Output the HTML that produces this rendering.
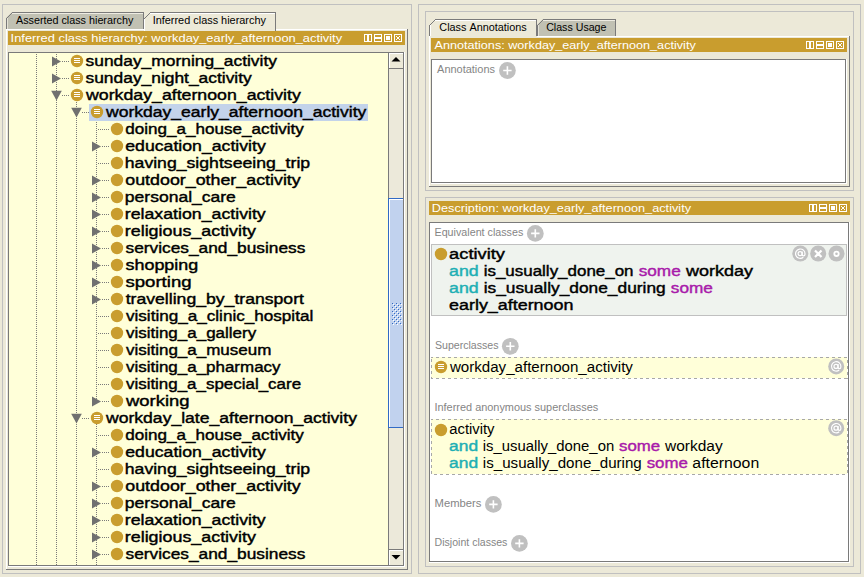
<!DOCTYPE html>
<html><head><meta charset="utf-8"><style>
html,body{margin:0;padding:0;background:#ECE9D8;width:864px;height:577px;overflow:hidden}
svg{display:block} rect{shape-rendering:crispEdges}
text{font-family:"Liberation Sans",sans-serif;font-kerning:none;white-space:pre}
</style></head><body>
<svg width="864" height="577" viewBox="0 0 864 577">
<rect x="0" y="0" width="864" height="577" fill="#ECE9D8"/>
<rect x="2" y="4" width="410" height="1" fill="#C0C0C0"/>
<rect x="2" y="573" width="410" height="1" fill="#C0C0C0"/>
<rect x="2" y="4" width="1" height="570" fill="#C0C0C0"/>
<rect x="411" y="4" width="1" height="570" fill="#C0C0C0"/>
<polygon points="6,29 6,18 12,12 144,12 144,29" fill="#C1C1B3"/>
<rect x="12" y="13" width="131" height="1" fill="#EEECE2"/>
<rect x="7" y="18" width="1" height="11" fill="#E4E2D6"/>
<rect x="12" y="12" width="132" height="1" fill="#7A7A7A"/>
<rect x="6" y="18" width="1" height="11" fill="#7A7A7A"/>
<rect x="143" y="12" width="1" height="17" fill="#7A7A7A"/>
<rect x="6" y="18" width="1" height="1" fill="#7A7A7A"/>
<rect x="7" y="17" width="1" height="1" fill="#7A7A7A"/>
<rect x="8" y="16" width="1" height="1" fill="#7A7A7A"/>
<rect x="9" y="15" width="1" height="1" fill="#7A7A7A"/>
<rect x="10" y="14" width="1" height="1" fill="#7A7A7A"/>
<rect x="11" y="13" width="1" height="1" fill="#7A7A7A"/>
<text x="15.98" y="24" font-size="10.00" font-weight="normal" fill="#000" textLength="117.34" lengthAdjust="spacingAndGlyphs">Asserted class hierarchy</text>
<polygon points="144,31 144,18 150,12 276,12 276,31" fill="#ECE9D8"/>
<rect x="150" y="12" width="126" height="1" fill="#7A7A7A"/>
<rect x="150" y="13" width="125" height="1" fill="#FFFFFF"/>
<rect x="144" y="18" width="1" height="13" fill="#FFFFFF"/>
<rect x="275" y="12" width="1" height="19" fill="#7A7A7A"/>
<rect x="144" y="18" width="1" height="1" fill="#7A7A7A"/>
<rect x="145" y="17" width="1" height="1" fill="#7A7A7A"/>
<rect x="146" y="16" width="1" height="1" fill="#7A7A7A"/>
<rect x="147" y="15" width="1" height="1" fill="#7A7A7A"/>
<rect x="148" y="14" width="1" height="1" fill="#7A7A7A"/>
<rect x="149" y="13" width="1" height="1" fill="#7A7A7A"/>
<text x="152.69" y="24" font-size="10.00" font-weight="normal" fill="#000" textLength="113.23" lengthAdjust="spacingAndGlyphs">Inferred class hierarchy</text>
<rect x="6" y="29" width="138" height="1" fill="#FFFFFF"/>
<rect x="276" y="29" width="131" height="1" fill="#FFFFFF"/>
<rect x="6" y="29" width="1" height="540" fill="#FFFFFF"/>
<rect x="407" y="29" width="1" height="541" fill="#7A7A7A"/>
<rect x="6" y="569" width="402" height="1" fill="#7A7A7A"/>
<rect x="8" y="31" width="397" height="14" fill="#C99D2E"/>
<text x="10.61" y="42" font-size="11.44" font-weight="normal" fill="#FFFFFF" textLength="331.51" lengthAdjust="spacingAndGlyphs">Inferred class hierarchy: workday_early_afternoon_activity</text>
<rect x="364" y="34" width="8" height="8" fill="#FFFFFF"/>
<rect x="365" y="35" width="2" height="6" fill="#C99D2E"/>
<rect x="369" y="35" width="2" height="6" fill="#C99D2E"/>
<rect x="374" y="34" width="8" height="8" fill="#FFFFFF"/>
<rect x="375" y="35" width="6" height="2" fill="#C99D2E"/>
<rect x="375" y="39" width="6" height="2" fill="#C99D2E"/>
<rect x="384" y="34" width="8" height="8" fill="#FFFFFF"/>
<rect x="385" y="35" width="6" height="6" fill="#C99D2E"/>
<rect x="386" y="36" width="4" height="4" fill="#FFFFFF"/>
<rect x="394" y="34" width="8" height="8" fill="#FFFFFF"/>
<rect x="395" y="35" width="6" height="6" fill="#C99D2E"/>
<rect x="396" y="36" width="1" height="1" fill="#FFFFFF"/>
<rect x="399" y="36" width="1" height="1" fill="#FFFFFF"/>
<rect x="397" y="37" width="1" height="1" fill="#FFFFFF"/>
<rect x="398" y="37" width="1" height="1" fill="#FFFFFF"/>
<rect x="397" y="38" width="1" height="1" fill="#FFFFFF"/>
<rect x="398" y="38" width="1" height="1" fill="#FFFFFF"/>
<rect x="396" y="39" width="1" height="1" fill="#FFFFFF"/>
<rect x="399" y="39" width="1" height="1" fill="#FFFFFF"/>
<rect x="9" y="53" width="394" height="512" fill="#FFFFD9"/>
<rect x="8" y="52" width="396" height="1" fill="#7A7A7A"/>
<rect x="8" y="52" width="1" height="514" fill="#7A7A7A"/>
<rect x="8" y="565" width="396" height="1" fill="#7A7A7A"/>
<rect x="403" y="52" width="1" height="514" fill="#7A7A7A"/>
<rect x="8" y="566" width="397" height="1" fill="#FFFFFF"/>
<rect x="404" y="52" width="1" height="515" fill="#FFFFFF"/>
<rect x="89" y="104" width="279" height="17" fill="#C3D3EA"/>
<rect x="36" y="54" width="1" height="1" fill="#7A7A7A"/>
<rect x="36" y="56" width="1" height="1" fill="#7A7A7A"/>
<rect x="36" y="58" width="1" height="1" fill="#7A7A7A"/>
<rect x="36" y="60" width="1" height="1" fill="#7A7A7A"/>
<rect x="36" y="62" width="1" height="1" fill="#7A7A7A"/>
<rect x="36" y="64" width="1" height="1" fill="#7A7A7A"/>
<rect x="36" y="66" width="1" height="1" fill="#7A7A7A"/>
<rect x="36" y="68" width="1" height="1" fill="#7A7A7A"/>
<rect x="36" y="70" width="1" height="1" fill="#7A7A7A"/>
<rect x="36" y="72" width="1" height="1" fill="#7A7A7A"/>
<rect x="36" y="74" width="1" height="1" fill="#7A7A7A"/>
<rect x="36" y="76" width="1" height="1" fill="#7A7A7A"/>
<rect x="36" y="78" width="1" height="1" fill="#7A7A7A"/>
<rect x="36" y="80" width="1" height="1" fill="#7A7A7A"/>
<rect x="36" y="82" width="1" height="1" fill="#7A7A7A"/>
<rect x="36" y="84" width="1" height="1" fill="#7A7A7A"/>
<rect x="36" y="86" width="1" height="1" fill="#7A7A7A"/>
<rect x="36" y="88" width="1" height="1" fill="#7A7A7A"/>
<rect x="36" y="90" width="1" height="1" fill="#7A7A7A"/>
<rect x="36" y="92" width="1" height="1" fill="#7A7A7A"/>
<rect x="36" y="94" width="1" height="1" fill="#7A7A7A"/>
<rect x="36" y="96" width="1" height="1" fill="#7A7A7A"/>
<rect x="36" y="98" width="1" height="1" fill="#7A7A7A"/>
<rect x="36" y="100" width="1" height="1" fill="#7A7A7A"/>
<rect x="36" y="102" width="1" height="1" fill="#7A7A7A"/>
<rect x="36" y="104" width="1" height="1" fill="#7A7A7A"/>
<rect x="36" y="106" width="1" height="1" fill="#7A7A7A"/>
<rect x="36" y="108" width="1" height="1" fill="#7A7A7A"/>
<rect x="36" y="110" width="1" height="1" fill="#7A7A7A"/>
<rect x="36" y="112" width="1" height="1" fill="#7A7A7A"/>
<rect x="36" y="114" width="1" height="1" fill="#7A7A7A"/>
<rect x="36" y="116" width="1" height="1" fill="#7A7A7A"/>
<rect x="36" y="118" width="1" height="1" fill="#7A7A7A"/>
<rect x="36" y="120" width="1" height="1" fill="#7A7A7A"/>
<rect x="36" y="122" width="1" height="1" fill="#7A7A7A"/>
<rect x="36" y="124" width="1" height="1" fill="#7A7A7A"/>
<rect x="36" y="126" width="1" height="1" fill="#7A7A7A"/>
<rect x="36" y="128" width="1" height="1" fill="#7A7A7A"/>
<rect x="36" y="130" width="1" height="1" fill="#7A7A7A"/>
<rect x="36" y="132" width="1" height="1" fill="#7A7A7A"/>
<rect x="36" y="134" width="1" height="1" fill="#7A7A7A"/>
<rect x="36" y="136" width="1" height="1" fill="#7A7A7A"/>
<rect x="36" y="138" width="1" height="1" fill="#7A7A7A"/>
<rect x="36" y="140" width="1" height="1" fill="#7A7A7A"/>
<rect x="36" y="142" width="1" height="1" fill="#7A7A7A"/>
<rect x="36" y="144" width="1" height="1" fill="#7A7A7A"/>
<rect x="36" y="146" width="1" height="1" fill="#7A7A7A"/>
<rect x="36" y="148" width="1" height="1" fill="#7A7A7A"/>
<rect x="36" y="150" width="1" height="1" fill="#7A7A7A"/>
<rect x="36" y="152" width="1" height="1" fill="#7A7A7A"/>
<rect x="36" y="154" width="1" height="1" fill="#7A7A7A"/>
<rect x="36" y="156" width="1" height="1" fill="#7A7A7A"/>
<rect x="36" y="158" width="1" height="1" fill="#7A7A7A"/>
<rect x="36" y="160" width="1" height="1" fill="#7A7A7A"/>
<rect x="36" y="162" width="1" height="1" fill="#7A7A7A"/>
<rect x="36" y="164" width="1" height="1" fill="#7A7A7A"/>
<rect x="36" y="166" width="1" height="1" fill="#7A7A7A"/>
<rect x="36" y="168" width="1" height="1" fill="#7A7A7A"/>
<rect x="36" y="170" width="1" height="1" fill="#7A7A7A"/>
<rect x="36" y="172" width="1" height="1" fill="#7A7A7A"/>
<rect x="36" y="174" width="1" height="1" fill="#7A7A7A"/>
<rect x="36" y="176" width="1" height="1" fill="#7A7A7A"/>
<rect x="36" y="178" width="1" height="1" fill="#7A7A7A"/>
<rect x="36" y="180" width="1" height="1" fill="#7A7A7A"/>
<rect x="36" y="182" width="1" height="1" fill="#7A7A7A"/>
<rect x="36" y="184" width="1" height="1" fill="#7A7A7A"/>
<rect x="36" y="186" width="1" height="1" fill="#7A7A7A"/>
<rect x="36" y="188" width="1" height="1" fill="#7A7A7A"/>
<rect x="36" y="190" width="1" height="1" fill="#7A7A7A"/>
<rect x="36" y="192" width="1" height="1" fill="#7A7A7A"/>
<rect x="36" y="194" width="1" height="1" fill="#7A7A7A"/>
<rect x="36" y="196" width="1" height="1" fill="#7A7A7A"/>
<rect x="36" y="198" width="1" height="1" fill="#7A7A7A"/>
<rect x="36" y="200" width="1" height="1" fill="#7A7A7A"/>
<rect x="36" y="202" width="1" height="1" fill="#7A7A7A"/>
<rect x="36" y="204" width="1" height="1" fill="#7A7A7A"/>
<rect x="36" y="206" width="1" height="1" fill="#7A7A7A"/>
<rect x="36" y="208" width="1" height="1" fill="#7A7A7A"/>
<rect x="36" y="210" width="1" height="1" fill="#7A7A7A"/>
<rect x="36" y="212" width="1" height="1" fill="#7A7A7A"/>
<rect x="36" y="214" width="1" height="1" fill="#7A7A7A"/>
<rect x="36" y="216" width="1" height="1" fill="#7A7A7A"/>
<rect x="36" y="218" width="1" height="1" fill="#7A7A7A"/>
<rect x="36" y="220" width="1" height="1" fill="#7A7A7A"/>
<rect x="36" y="222" width="1" height="1" fill="#7A7A7A"/>
<rect x="36" y="224" width="1" height="1" fill="#7A7A7A"/>
<rect x="36" y="226" width="1" height="1" fill="#7A7A7A"/>
<rect x="36" y="228" width="1" height="1" fill="#7A7A7A"/>
<rect x="36" y="230" width="1" height="1" fill="#7A7A7A"/>
<rect x="36" y="232" width="1" height="1" fill="#7A7A7A"/>
<rect x="36" y="234" width="1" height="1" fill="#7A7A7A"/>
<rect x="36" y="236" width="1" height="1" fill="#7A7A7A"/>
<rect x="36" y="238" width="1" height="1" fill="#7A7A7A"/>
<rect x="36" y="240" width="1" height="1" fill="#7A7A7A"/>
<rect x="36" y="242" width="1" height="1" fill="#7A7A7A"/>
<rect x="36" y="244" width="1" height="1" fill="#7A7A7A"/>
<rect x="36" y="246" width="1" height="1" fill="#7A7A7A"/>
<rect x="36" y="248" width="1" height="1" fill="#7A7A7A"/>
<rect x="36" y="250" width="1" height="1" fill="#7A7A7A"/>
<rect x="36" y="252" width="1" height="1" fill="#7A7A7A"/>
<rect x="36" y="254" width="1" height="1" fill="#7A7A7A"/>
<rect x="36" y="256" width="1" height="1" fill="#7A7A7A"/>
<rect x="36" y="258" width="1" height="1" fill="#7A7A7A"/>
<rect x="36" y="260" width="1" height="1" fill="#7A7A7A"/>
<rect x="36" y="262" width="1" height="1" fill="#7A7A7A"/>
<rect x="36" y="264" width="1" height="1" fill="#7A7A7A"/>
<rect x="36" y="266" width="1" height="1" fill="#7A7A7A"/>
<rect x="36" y="268" width="1" height="1" fill="#7A7A7A"/>
<rect x="36" y="270" width="1" height="1" fill="#7A7A7A"/>
<rect x="36" y="272" width="1" height="1" fill="#7A7A7A"/>
<rect x="36" y="274" width="1" height="1" fill="#7A7A7A"/>
<rect x="36" y="276" width="1" height="1" fill="#7A7A7A"/>
<rect x="36" y="278" width="1" height="1" fill="#7A7A7A"/>
<rect x="36" y="280" width="1" height="1" fill="#7A7A7A"/>
<rect x="36" y="282" width="1" height="1" fill="#7A7A7A"/>
<rect x="36" y="284" width="1" height="1" fill="#7A7A7A"/>
<rect x="36" y="286" width="1" height="1" fill="#7A7A7A"/>
<rect x="36" y="288" width="1" height="1" fill="#7A7A7A"/>
<rect x="36" y="290" width="1" height="1" fill="#7A7A7A"/>
<rect x="36" y="292" width="1" height="1" fill="#7A7A7A"/>
<rect x="36" y="294" width="1" height="1" fill="#7A7A7A"/>
<rect x="36" y="296" width="1" height="1" fill="#7A7A7A"/>
<rect x="36" y="298" width="1" height="1" fill="#7A7A7A"/>
<rect x="36" y="300" width="1" height="1" fill="#7A7A7A"/>
<rect x="36" y="302" width="1" height="1" fill="#7A7A7A"/>
<rect x="36" y="304" width="1" height="1" fill="#7A7A7A"/>
<rect x="36" y="306" width="1" height="1" fill="#7A7A7A"/>
<rect x="36" y="308" width="1" height="1" fill="#7A7A7A"/>
<rect x="36" y="310" width="1" height="1" fill="#7A7A7A"/>
<rect x="36" y="312" width="1" height="1" fill="#7A7A7A"/>
<rect x="36" y="314" width="1" height="1" fill="#7A7A7A"/>
<rect x="36" y="316" width="1" height="1" fill="#7A7A7A"/>
<rect x="36" y="318" width="1" height="1" fill="#7A7A7A"/>
<rect x="36" y="320" width="1" height="1" fill="#7A7A7A"/>
<rect x="36" y="322" width="1" height="1" fill="#7A7A7A"/>
<rect x="36" y="324" width="1" height="1" fill="#7A7A7A"/>
<rect x="36" y="326" width="1" height="1" fill="#7A7A7A"/>
<rect x="36" y="328" width="1" height="1" fill="#7A7A7A"/>
<rect x="36" y="330" width="1" height="1" fill="#7A7A7A"/>
<rect x="36" y="332" width="1" height="1" fill="#7A7A7A"/>
<rect x="36" y="334" width="1" height="1" fill="#7A7A7A"/>
<rect x="36" y="336" width="1" height="1" fill="#7A7A7A"/>
<rect x="36" y="338" width="1" height="1" fill="#7A7A7A"/>
<rect x="36" y="340" width="1" height="1" fill="#7A7A7A"/>
<rect x="36" y="342" width="1" height="1" fill="#7A7A7A"/>
<rect x="36" y="344" width="1" height="1" fill="#7A7A7A"/>
<rect x="36" y="346" width="1" height="1" fill="#7A7A7A"/>
<rect x="36" y="348" width="1" height="1" fill="#7A7A7A"/>
<rect x="36" y="350" width="1" height="1" fill="#7A7A7A"/>
<rect x="36" y="352" width="1" height="1" fill="#7A7A7A"/>
<rect x="36" y="354" width="1" height="1" fill="#7A7A7A"/>
<rect x="36" y="356" width="1" height="1" fill="#7A7A7A"/>
<rect x="36" y="358" width="1" height="1" fill="#7A7A7A"/>
<rect x="36" y="360" width="1" height="1" fill="#7A7A7A"/>
<rect x="36" y="362" width="1" height="1" fill="#7A7A7A"/>
<rect x="36" y="364" width="1" height="1" fill="#7A7A7A"/>
<rect x="36" y="366" width="1" height="1" fill="#7A7A7A"/>
<rect x="36" y="368" width="1" height="1" fill="#7A7A7A"/>
<rect x="36" y="370" width="1" height="1" fill="#7A7A7A"/>
<rect x="36" y="372" width="1" height="1" fill="#7A7A7A"/>
<rect x="36" y="374" width="1" height="1" fill="#7A7A7A"/>
<rect x="36" y="376" width="1" height="1" fill="#7A7A7A"/>
<rect x="36" y="378" width="1" height="1" fill="#7A7A7A"/>
<rect x="36" y="380" width="1" height="1" fill="#7A7A7A"/>
<rect x="36" y="382" width="1" height="1" fill="#7A7A7A"/>
<rect x="36" y="384" width="1" height="1" fill="#7A7A7A"/>
<rect x="36" y="386" width="1" height="1" fill="#7A7A7A"/>
<rect x="36" y="388" width="1" height="1" fill="#7A7A7A"/>
<rect x="36" y="390" width="1" height="1" fill="#7A7A7A"/>
<rect x="36" y="392" width="1" height="1" fill="#7A7A7A"/>
<rect x="36" y="394" width="1" height="1" fill="#7A7A7A"/>
<rect x="36" y="396" width="1" height="1" fill="#7A7A7A"/>
<rect x="36" y="398" width="1" height="1" fill="#7A7A7A"/>
<rect x="36" y="400" width="1" height="1" fill="#7A7A7A"/>
<rect x="36" y="402" width="1" height="1" fill="#7A7A7A"/>
<rect x="36" y="404" width="1" height="1" fill="#7A7A7A"/>
<rect x="36" y="406" width="1" height="1" fill="#7A7A7A"/>
<rect x="36" y="408" width="1" height="1" fill="#7A7A7A"/>
<rect x="36" y="410" width="1" height="1" fill="#7A7A7A"/>
<rect x="36" y="412" width="1" height="1" fill="#7A7A7A"/>
<rect x="36" y="414" width="1" height="1" fill="#7A7A7A"/>
<rect x="36" y="416" width="1" height="1" fill="#7A7A7A"/>
<rect x="36" y="418" width="1" height="1" fill="#7A7A7A"/>
<rect x="36" y="420" width="1" height="1" fill="#7A7A7A"/>
<rect x="36" y="422" width="1" height="1" fill="#7A7A7A"/>
<rect x="36" y="424" width="1" height="1" fill="#7A7A7A"/>
<rect x="36" y="426" width="1" height="1" fill="#7A7A7A"/>
<rect x="36" y="428" width="1" height="1" fill="#7A7A7A"/>
<rect x="36" y="430" width="1" height="1" fill="#7A7A7A"/>
<rect x="36" y="432" width="1" height="1" fill="#7A7A7A"/>
<rect x="36" y="434" width="1" height="1" fill="#7A7A7A"/>
<rect x="36" y="436" width="1" height="1" fill="#7A7A7A"/>
<rect x="36" y="438" width="1" height="1" fill="#7A7A7A"/>
<rect x="36" y="440" width="1" height="1" fill="#7A7A7A"/>
<rect x="36" y="442" width="1" height="1" fill="#7A7A7A"/>
<rect x="36" y="444" width="1" height="1" fill="#7A7A7A"/>
<rect x="36" y="446" width="1" height="1" fill="#7A7A7A"/>
<rect x="36" y="448" width="1" height="1" fill="#7A7A7A"/>
<rect x="36" y="450" width="1" height="1" fill="#7A7A7A"/>
<rect x="36" y="452" width="1" height="1" fill="#7A7A7A"/>
<rect x="36" y="454" width="1" height="1" fill="#7A7A7A"/>
<rect x="36" y="456" width="1" height="1" fill="#7A7A7A"/>
<rect x="36" y="458" width="1" height="1" fill="#7A7A7A"/>
<rect x="36" y="460" width="1" height="1" fill="#7A7A7A"/>
<rect x="36" y="462" width="1" height="1" fill="#7A7A7A"/>
<rect x="36" y="464" width="1" height="1" fill="#7A7A7A"/>
<rect x="36" y="466" width="1" height="1" fill="#7A7A7A"/>
<rect x="36" y="468" width="1" height="1" fill="#7A7A7A"/>
<rect x="36" y="470" width="1" height="1" fill="#7A7A7A"/>
<rect x="36" y="472" width="1" height="1" fill="#7A7A7A"/>
<rect x="36" y="474" width="1" height="1" fill="#7A7A7A"/>
<rect x="36" y="476" width="1" height="1" fill="#7A7A7A"/>
<rect x="36" y="478" width="1" height="1" fill="#7A7A7A"/>
<rect x="36" y="480" width="1" height="1" fill="#7A7A7A"/>
<rect x="36" y="482" width="1" height="1" fill="#7A7A7A"/>
<rect x="36" y="484" width="1" height="1" fill="#7A7A7A"/>
<rect x="36" y="486" width="1" height="1" fill="#7A7A7A"/>
<rect x="36" y="488" width="1" height="1" fill="#7A7A7A"/>
<rect x="36" y="490" width="1" height="1" fill="#7A7A7A"/>
<rect x="36" y="492" width="1" height="1" fill="#7A7A7A"/>
<rect x="36" y="494" width="1" height="1" fill="#7A7A7A"/>
<rect x="36" y="496" width="1" height="1" fill="#7A7A7A"/>
<rect x="36" y="498" width="1" height="1" fill="#7A7A7A"/>
<rect x="36" y="500" width="1" height="1" fill="#7A7A7A"/>
<rect x="36" y="502" width="1" height="1" fill="#7A7A7A"/>
<rect x="36" y="504" width="1" height="1" fill="#7A7A7A"/>
<rect x="36" y="506" width="1" height="1" fill="#7A7A7A"/>
<rect x="36" y="508" width="1" height="1" fill="#7A7A7A"/>
<rect x="36" y="510" width="1" height="1" fill="#7A7A7A"/>
<rect x="36" y="512" width="1" height="1" fill="#7A7A7A"/>
<rect x="36" y="514" width="1" height="1" fill="#7A7A7A"/>
<rect x="36" y="516" width="1" height="1" fill="#7A7A7A"/>
<rect x="36" y="518" width="1" height="1" fill="#7A7A7A"/>
<rect x="36" y="520" width="1" height="1" fill="#7A7A7A"/>
<rect x="36" y="522" width="1" height="1" fill="#7A7A7A"/>
<rect x="36" y="524" width="1" height="1" fill="#7A7A7A"/>
<rect x="36" y="526" width="1" height="1" fill="#7A7A7A"/>
<rect x="36" y="528" width="1" height="1" fill="#7A7A7A"/>
<rect x="36" y="530" width="1" height="1" fill="#7A7A7A"/>
<rect x="36" y="532" width="1" height="1" fill="#7A7A7A"/>
<rect x="36" y="534" width="1" height="1" fill="#7A7A7A"/>
<rect x="36" y="536" width="1" height="1" fill="#7A7A7A"/>
<rect x="36" y="538" width="1" height="1" fill="#7A7A7A"/>
<rect x="36" y="540" width="1" height="1" fill="#7A7A7A"/>
<rect x="36" y="542" width="1" height="1" fill="#7A7A7A"/>
<rect x="36" y="544" width="1" height="1" fill="#7A7A7A"/>
<rect x="36" y="546" width="1" height="1" fill="#7A7A7A"/>
<rect x="36" y="548" width="1" height="1" fill="#7A7A7A"/>
<rect x="36" y="550" width="1" height="1" fill="#7A7A7A"/>
<rect x="36" y="552" width="1" height="1" fill="#7A7A7A"/>
<rect x="36" y="554" width="1" height="1" fill="#7A7A7A"/>
<rect x="36" y="556" width="1" height="1" fill="#7A7A7A"/>
<rect x="36" y="558" width="1" height="1" fill="#7A7A7A"/>
<rect x="36" y="560" width="1" height="1" fill="#7A7A7A"/>
<rect x="36" y="562" width="1" height="1" fill="#7A7A7A"/>
<rect x="36" y="564" width="1" height="1" fill="#7A7A7A"/>
<rect x="56" y="54" width="1" height="1" fill="#7A7A7A"/>
<rect x="56" y="56" width="1" height="1" fill="#7A7A7A"/>
<rect x="56" y="58" width="1" height="1" fill="#7A7A7A"/>
<rect x="56" y="60" width="1" height="1" fill="#7A7A7A"/>
<rect x="56" y="62" width="1" height="1" fill="#7A7A7A"/>
<rect x="56" y="64" width="1" height="1" fill="#7A7A7A"/>
<rect x="56" y="66" width="1" height="1" fill="#7A7A7A"/>
<rect x="56" y="68" width="1" height="1" fill="#7A7A7A"/>
<rect x="56" y="70" width="1" height="1" fill="#7A7A7A"/>
<rect x="56" y="72" width="1" height="1" fill="#7A7A7A"/>
<rect x="56" y="74" width="1" height="1" fill="#7A7A7A"/>
<rect x="56" y="76" width="1" height="1" fill="#7A7A7A"/>
<rect x="56" y="78" width="1" height="1" fill="#7A7A7A"/>
<rect x="56" y="80" width="1" height="1" fill="#7A7A7A"/>
<rect x="56" y="82" width="1" height="1" fill="#7A7A7A"/>
<rect x="56" y="84" width="1" height="1" fill="#7A7A7A"/>
<rect x="56" y="86" width="1" height="1" fill="#7A7A7A"/>
<rect x="56" y="88" width="1" height="1" fill="#7A7A7A"/>
<rect x="56" y="90" width="1" height="1" fill="#7A7A7A"/>
<rect x="56" y="92" width="1" height="1" fill="#7A7A7A"/>
<rect x="56" y="94" width="1" height="1" fill="#7A7A7A"/>
<rect x="56" y="96" width="1" height="1" fill="#7A7A7A"/>
<rect x="56" y="98" width="1" height="1" fill="#7A7A7A"/>
<rect x="56" y="100" width="1" height="1" fill="#7A7A7A"/>
<rect x="56" y="102" width="1" height="1" fill="#7A7A7A"/>
<rect x="56" y="104" width="1" height="1" fill="#7A7A7A"/>
<rect x="56" y="106" width="1" height="1" fill="#7A7A7A"/>
<rect x="56" y="108" width="1" height="1" fill="#7A7A7A"/>
<rect x="56" y="110" width="1" height="1" fill="#7A7A7A"/>
<rect x="56" y="112" width="1" height="1" fill="#7A7A7A"/>
<rect x="56" y="114" width="1" height="1" fill="#7A7A7A"/>
<rect x="56" y="116" width="1" height="1" fill="#7A7A7A"/>
<rect x="56" y="118" width="1" height="1" fill="#7A7A7A"/>
<rect x="56" y="120" width="1" height="1" fill="#7A7A7A"/>
<rect x="56" y="122" width="1" height="1" fill="#7A7A7A"/>
<rect x="56" y="124" width="1" height="1" fill="#7A7A7A"/>
<rect x="56" y="126" width="1" height="1" fill="#7A7A7A"/>
<rect x="56" y="128" width="1" height="1" fill="#7A7A7A"/>
<rect x="56" y="130" width="1" height="1" fill="#7A7A7A"/>
<rect x="56" y="132" width="1" height="1" fill="#7A7A7A"/>
<rect x="56" y="134" width="1" height="1" fill="#7A7A7A"/>
<rect x="56" y="136" width="1" height="1" fill="#7A7A7A"/>
<rect x="56" y="138" width="1" height="1" fill="#7A7A7A"/>
<rect x="56" y="140" width="1" height="1" fill="#7A7A7A"/>
<rect x="56" y="142" width="1" height="1" fill="#7A7A7A"/>
<rect x="56" y="144" width="1" height="1" fill="#7A7A7A"/>
<rect x="56" y="146" width="1" height="1" fill="#7A7A7A"/>
<rect x="56" y="148" width="1" height="1" fill="#7A7A7A"/>
<rect x="56" y="150" width="1" height="1" fill="#7A7A7A"/>
<rect x="56" y="152" width="1" height="1" fill="#7A7A7A"/>
<rect x="56" y="154" width="1" height="1" fill="#7A7A7A"/>
<rect x="56" y="156" width="1" height="1" fill="#7A7A7A"/>
<rect x="56" y="158" width="1" height="1" fill="#7A7A7A"/>
<rect x="56" y="160" width="1" height="1" fill="#7A7A7A"/>
<rect x="56" y="162" width="1" height="1" fill="#7A7A7A"/>
<rect x="56" y="164" width="1" height="1" fill="#7A7A7A"/>
<rect x="56" y="166" width="1" height="1" fill="#7A7A7A"/>
<rect x="56" y="168" width="1" height="1" fill="#7A7A7A"/>
<rect x="56" y="170" width="1" height="1" fill="#7A7A7A"/>
<rect x="56" y="172" width="1" height="1" fill="#7A7A7A"/>
<rect x="56" y="174" width="1" height="1" fill="#7A7A7A"/>
<rect x="56" y="176" width="1" height="1" fill="#7A7A7A"/>
<rect x="56" y="178" width="1" height="1" fill="#7A7A7A"/>
<rect x="56" y="180" width="1" height="1" fill="#7A7A7A"/>
<rect x="56" y="182" width="1" height="1" fill="#7A7A7A"/>
<rect x="56" y="184" width="1" height="1" fill="#7A7A7A"/>
<rect x="56" y="186" width="1" height="1" fill="#7A7A7A"/>
<rect x="56" y="188" width="1" height="1" fill="#7A7A7A"/>
<rect x="56" y="190" width="1" height="1" fill="#7A7A7A"/>
<rect x="56" y="192" width="1" height="1" fill="#7A7A7A"/>
<rect x="56" y="194" width="1" height="1" fill="#7A7A7A"/>
<rect x="56" y="196" width="1" height="1" fill="#7A7A7A"/>
<rect x="56" y="198" width="1" height="1" fill="#7A7A7A"/>
<rect x="56" y="200" width="1" height="1" fill="#7A7A7A"/>
<rect x="56" y="202" width="1" height="1" fill="#7A7A7A"/>
<rect x="56" y="204" width="1" height="1" fill="#7A7A7A"/>
<rect x="56" y="206" width="1" height="1" fill="#7A7A7A"/>
<rect x="56" y="208" width="1" height="1" fill="#7A7A7A"/>
<rect x="56" y="210" width="1" height="1" fill="#7A7A7A"/>
<rect x="56" y="212" width="1" height="1" fill="#7A7A7A"/>
<rect x="56" y="214" width="1" height="1" fill="#7A7A7A"/>
<rect x="56" y="216" width="1" height="1" fill="#7A7A7A"/>
<rect x="56" y="218" width="1" height="1" fill="#7A7A7A"/>
<rect x="56" y="220" width="1" height="1" fill="#7A7A7A"/>
<rect x="56" y="222" width="1" height="1" fill="#7A7A7A"/>
<rect x="56" y="224" width="1" height="1" fill="#7A7A7A"/>
<rect x="56" y="226" width="1" height="1" fill="#7A7A7A"/>
<rect x="56" y="228" width="1" height="1" fill="#7A7A7A"/>
<rect x="56" y="230" width="1" height="1" fill="#7A7A7A"/>
<rect x="56" y="232" width="1" height="1" fill="#7A7A7A"/>
<rect x="56" y="234" width="1" height="1" fill="#7A7A7A"/>
<rect x="56" y="236" width="1" height="1" fill="#7A7A7A"/>
<rect x="56" y="238" width="1" height="1" fill="#7A7A7A"/>
<rect x="56" y="240" width="1" height="1" fill="#7A7A7A"/>
<rect x="56" y="242" width="1" height="1" fill="#7A7A7A"/>
<rect x="56" y="244" width="1" height="1" fill="#7A7A7A"/>
<rect x="56" y="246" width="1" height="1" fill="#7A7A7A"/>
<rect x="56" y="248" width="1" height="1" fill="#7A7A7A"/>
<rect x="56" y="250" width="1" height="1" fill="#7A7A7A"/>
<rect x="56" y="252" width="1" height="1" fill="#7A7A7A"/>
<rect x="56" y="254" width="1" height="1" fill="#7A7A7A"/>
<rect x="56" y="256" width="1" height="1" fill="#7A7A7A"/>
<rect x="56" y="258" width="1" height="1" fill="#7A7A7A"/>
<rect x="56" y="260" width="1" height="1" fill="#7A7A7A"/>
<rect x="56" y="262" width="1" height="1" fill="#7A7A7A"/>
<rect x="56" y="264" width="1" height="1" fill="#7A7A7A"/>
<rect x="56" y="266" width="1" height="1" fill="#7A7A7A"/>
<rect x="56" y="268" width="1" height="1" fill="#7A7A7A"/>
<rect x="56" y="270" width="1" height="1" fill="#7A7A7A"/>
<rect x="56" y="272" width="1" height="1" fill="#7A7A7A"/>
<rect x="56" y="274" width="1" height="1" fill="#7A7A7A"/>
<rect x="56" y="276" width="1" height="1" fill="#7A7A7A"/>
<rect x="56" y="278" width="1" height="1" fill="#7A7A7A"/>
<rect x="56" y="280" width="1" height="1" fill="#7A7A7A"/>
<rect x="56" y="282" width="1" height="1" fill="#7A7A7A"/>
<rect x="56" y="284" width="1" height="1" fill="#7A7A7A"/>
<rect x="56" y="286" width="1" height="1" fill="#7A7A7A"/>
<rect x="56" y="288" width="1" height="1" fill="#7A7A7A"/>
<rect x="56" y="290" width="1" height="1" fill="#7A7A7A"/>
<rect x="56" y="292" width="1" height="1" fill="#7A7A7A"/>
<rect x="56" y="294" width="1" height="1" fill="#7A7A7A"/>
<rect x="56" y="296" width="1" height="1" fill="#7A7A7A"/>
<rect x="56" y="298" width="1" height="1" fill="#7A7A7A"/>
<rect x="56" y="300" width="1" height="1" fill="#7A7A7A"/>
<rect x="56" y="302" width="1" height="1" fill="#7A7A7A"/>
<rect x="56" y="304" width="1" height="1" fill="#7A7A7A"/>
<rect x="56" y="306" width="1" height="1" fill="#7A7A7A"/>
<rect x="56" y="308" width="1" height="1" fill="#7A7A7A"/>
<rect x="56" y="310" width="1" height="1" fill="#7A7A7A"/>
<rect x="56" y="312" width="1" height="1" fill="#7A7A7A"/>
<rect x="56" y="314" width="1" height="1" fill="#7A7A7A"/>
<rect x="56" y="316" width="1" height="1" fill="#7A7A7A"/>
<rect x="56" y="318" width="1" height="1" fill="#7A7A7A"/>
<rect x="56" y="320" width="1" height="1" fill="#7A7A7A"/>
<rect x="56" y="322" width="1" height="1" fill="#7A7A7A"/>
<rect x="56" y="324" width="1" height="1" fill="#7A7A7A"/>
<rect x="56" y="326" width="1" height="1" fill="#7A7A7A"/>
<rect x="56" y="328" width="1" height="1" fill="#7A7A7A"/>
<rect x="56" y="330" width="1" height="1" fill="#7A7A7A"/>
<rect x="56" y="332" width="1" height="1" fill="#7A7A7A"/>
<rect x="56" y="334" width="1" height="1" fill="#7A7A7A"/>
<rect x="56" y="336" width="1" height="1" fill="#7A7A7A"/>
<rect x="56" y="338" width="1" height="1" fill="#7A7A7A"/>
<rect x="56" y="340" width="1" height="1" fill="#7A7A7A"/>
<rect x="56" y="342" width="1" height="1" fill="#7A7A7A"/>
<rect x="56" y="344" width="1" height="1" fill="#7A7A7A"/>
<rect x="56" y="346" width="1" height="1" fill="#7A7A7A"/>
<rect x="56" y="348" width="1" height="1" fill="#7A7A7A"/>
<rect x="56" y="350" width="1" height="1" fill="#7A7A7A"/>
<rect x="56" y="352" width="1" height="1" fill="#7A7A7A"/>
<rect x="56" y="354" width="1" height="1" fill="#7A7A7A"/>
<rect x="56" y="356" width="1" height="1" fill="#7A7A7A"/>
<rect x="56" y="358" width="1" height="1" fill="#7A7A7A"/>
<rect x="56" y="360" width="1" height="1" fill="#7A7A7A"/>
<rect x="56" y="362" width="1" height="1" fill="#7A7A7A"/>
<rect x="56" y="364" width="1" height="1" fill="#7A7A7A"/>
<rect x="56" y="366" width="1" height="1" fill="#7A7A7A"/>
<rect x="56" y="368" width="1" height="1" fill="#7A7A7A"/>
<rect x="56" y="370" width="1" height="1" fill="#7A7A7A"/>
<rect x="56" y="372" width="1" height="1" fill="#7A7A7A"/>
<rect x="56" y="374" width="1" height="1" fill="#7A7A7A"/>
<rect x="56" y="376" width="1" height="1" fill="#7A7A7A"/>
<rect x="56" y="378" width="1" height="1" fill="#7A7A7A"/>
<rect x="56" y="380" width="1" height="1" fill="#7A7A7A"/>
<rect x="56" y="382" width="1" height="1" fill="#7A7A7A"/>
<rect x="56" y="384" width="1" height="1" fill="#7A7A7A"/>
<rect x="56" y="386" width="1" height="1" fill="#7A7A7A"/>
<rect x="56" y="388" width="1" height="1" fill="#7A7A7A"/>
<rect x="56" y="390" width="1" height="1" fill="#7A7A7A"/>
<rect x="56" y="392" width="1" height="1" fill="#7A7A7A"/>
<rect x="56" y="394" width="1" height="1" fill="#7A7A7A"/>
<rect x="56" y="396" width="1" height="1" fill="#7A7A7A"/>
<rect x="56" y="398" width="1" height="1" fill="#7A7A7A"/>
<rect x="56" y="400" width="1" height="1" fill="#7A7A7A"/>
<rect x="56" y="402" width="1" height="1" fill="#7A7A7A"/>
<rect x="56" y="404" width="1" height="1" fill="#7A7A7A"/>
<rect x="56" y="406" width="1" height="1" fill="#7A7A7A"/>
<rect x="56" y="408" width="1" height="1" fill="#7A7A7A"/>
<rect x="56" y="410" width="1" height="1" fill="#7A7A7A"/>
<rect x="56" y="412" width="1" height="1" fill="#7A7A7A"/>
<rect x="56" y="414" width="1" height="1" fill="#7A7A7A"/>
<rect x="56" y="416" width="1" height="1" fill="#7A7A7A"/>
<rect x="56" y="418" width="1" height="1" fill="#7A7A7A"/>
<rect x="56" y="420" width="1" height="1" fill="#7A7A7A"/>
<rect x="56" y="422" width="1" height="1" fill="#7A7A7A"/>
<rect x="56" y="424" width="1" height="1" fill="#7A7A7A"/>
<rect x="56" y="426" width="1" height="1" fill="#7A7A7A"/>
<rect x="56" y="428" width="1" height="1" fill="#7A7A7A"/>
<rect x="56" y="430" width="1" height="1" fill="#7A7A7A"/>
<rect x="56" y="432" width="1" height="1" fill="#7A7A7A"/>
<rect x="56" y="434" width="1" height="1" fill="#7A7A7A"/>
<rect x="56" y="436" width="1" height="1" fill="#7A7A7A"/>
<rect x="56" y="438" width="1" height="1" fill="#7A7A7A"/>
<rect x="56" y="440" width="1" height="1" fill="#7A7A7A"/>
<rect x="56" y="442" width="1" height="1" fill="#7A7A7A"/>
<rect x="56" y="444" width="1" height="1" fill="#7A7A7A"/>
<rect x="56" y="446" width="1" height="1" fill="#7A7A7A"/>
<rect x="56" y="448" width="1" height="1" fill="#7A7A7A"/>
<rect x="56" y="450" width="1" height="1" fill="#7A7A7A"/>
<rect x="56" y="452" width="1" height="1" fill="#7A7A7A"/>
<rect x="56" y="454" width="1" height="1" fill="#7A7A7A"/>
<rect x="56" y="456" width="1" height="1" fill="#7A7A7A"/>
<rect x="56" y="458" width="1" height="1" fill="#7A7A7A"/>
<rect x="56" y="460" width="1" height="1" fill="#7A7A7A"/>
<rect x="56" y="462" width="1" height="1" fill="#7A7A7A"/>
<rect x="56" y="464" width="1" height="1" fill="#7A7A7A"/>
<rect x="56" y="466" width="1" height="1" fill="#7A7A7A"/>
<rect x="56" y="468" width="1" height="1" fill="#7A7A7A"/>
<rect x="56" y="470" width="1" height="1" fill="#7A7A7A"/>
<rect x="56" y="472" width="1" height="1" fill="#7A7A7A"/>
<rect x="56" y="474" width="1" height="1" fill="#7A7A7A"/>
<rect x="56" y="476" width="1" height="1" fill="#7A7A7A"/>
<rect x="56" y="478" width="1" height="1" fill="#7A7A7A"/>
<rect x="56" y="480" width="1" height="1" fill="#7A7A7A"/>
<rect x="56" y="482" width="1" height="1" fill="#7A7A7A"/>
<rect x="56" y="484" width="1" height="1" fill="#7A7A7A"/>
<rect x="56" y="486" width="1" height="1" fill="#7A7A7A"/>
<rect x="56" y="488" width="1" height="1" fill="#7A7A7A"/>
<rect x="56" y="490" width="1" height="1" fill="#7A7A7A"/>
<rect x="56" y="492" width="1" height="1" fill="#7A7A7A"/>
<rect x="56" y="494" width="1" height="1" fill="#7A7A7A"/>
<rect x="56" y="496" width="1" height="1" fill="#7A7A7A"/>
<rect x="56" y="498" width="1" height="1" fill="#7A7A7A"/>
<rect x="56" y="500" width="1" height="1" fill="#7A7A7A"/>
<rect x="56" y="502" width="1" height="1" fill="#7A7A7A"/>
<rect x="56" y="504" width="1" height="1" fill="#7A7A7A"/>
<rect x="56" y="506" width="1" height="1" fill="#7A7A7A"/>
<rect x="56" y="508" width="1" height="1" fill="#7A7A7A"/>
<rect x="56" y="510" width="1" height="1" fill="#7A7A7A"/>
<rect x="56" y="512" width="1" height="1" fill="#7A7A7A"/>
<rect x="56" y="514" width="1" height="1" fill="#7A7A7A"/>
<rect x="56" y="516" width="1" height="1" fill="#7A7A7A"/>
<rect x="56" y="518" width="1" height="1" fill="#7A7A7A"/>
<rect x="56" y="520" width="1" height="1" fill="#7A7A7A"/>
<rect x="56" y="522" width="1" height="1" fill="#7A7A7A"/>
<rect x="56" y="524" width="1" height="1" fill="#7A7A7A"/>
<rect x="56" y="526" width="1" height="1" fill="#7A7A7A"/>
<rect x="56" y="528" width="1" height="1" fill="#7A7A7A"/>
<rect x="56" y="530" width="1" height="1" fill="#7A7A7A"/>
<rect x="56" y="532" width="1" height="1" fill="#7A7A7A"/>
<rect x="56" y="534" width="1" height="1" fill="#7A7A7A"/>
<rect x="56" y="536" width="1" height="1" fill="#7A7A7A"/>
<rect x="56" y="538" width="1" height="1" fill="#7A7A7A"/>
<rect x="56" y="540" width="1" height="1" fill="#7A7A7A"/>
<rect x="56" y="542" width="1" height="1" fill="#7A7A7A"/>
<rect x="56" y="544" width="1" height="1" fill="#7A7A7A"/>
<rect x="56" y="546" width="1" height="1" fill="#7A7A7A"/>
<rect x="56" y="548" width="1" height="1" fill="#7A7A7A"/>
<rect x="56" y="550" width="1" height="1" fill="#7A7A7A"/>
<rect x="56" y="552" width="1" height="1" fill="#7A7A7A"/>
<rect x="56" y="554" width="1" height="1" fill="#7A7A7A"/>
<rect x="56" y="556" width="1" height="1" fill="#7A7A7A"/>
<rect x="56" y="558" width="1" height="1" fill="#7A7A7A"/>
<rect x="56" y="560" width="1" height="1" fill="#7A7A7A"/>
<rect x="56" y="562" width="1" height="1" fill="#7A7A7A"/>
<rect x="56" y="564" width="1" height="1" fill="#7A7A7A"/>
<rect x="76" y="96" width="1" height="1" fill="#7A7A7A"/>
<rect x="76" y="98" width="1" height="1" fill="#7A7A7A"/>
<rect x="76" y="100" width="1" height="1" fill="#7A7A7A"/>
<rect x="76" y="102" width="1" height="1" fill="#7A7A7A"/>
<rect x="76" y="104" width="1" height="1" fill="#7A7A7A"/>
<rect x="76" y="106" width="1" height="1" fill="#7A7A7A"/>
<rect x="76" y="108" width="1" height="1" fill="#7A7A7A"/>
<rect x="76" y="110" width="1" height="1" fill="#7A7A7A"/>
<rect x="76" y="112" width="1" height="1" fill="#7A7A7A"/>
<rect x="76" y="114" width="1" height="1" fill="#7A7A7A"/>
<rect x="76" y="116" width="1" height="1" fill="#7A7A7A"/>
<rect x="76" y="118" width="1" height="1" fill="#7A7A7A"/>
<rect x="76" y="120" width="1" height="1" fill="#7A7A7A"/>
<rect x="76" y="122" width="1" height="1" fill="#7A7A7A"/>
<rect x="76" y="124" width="1" height="1" fill="#7A7A7A"/>
<rect x="76" y="126" width="1" height="1" fill="#7A7A7A"/>
<rect x="76" y="128" width="1" height="1" fill="#7A7A7A"/>
<rect x="76" y="130" width="1" height="1" fill="#7A7A7A"/>
<rect x="76" y="132" width="1" height="1" fill="#7A7A7A"/>
<rect x="76" y="134" width="1" height="1" fill="#7A7A7A"/>
<rect x="76" y="136" width="1" height="1" fill="#7A7A7A"/>
<rect x="76" y="138" width="1" height="1" fill="#7A7A7A"/>
<rect x="76" y="140" width="1" height="1" fill="#7A7A7A"/>
<rect x="76" y="142" width="1" height="1" fill="#7A7A7A"/>
<rect x="76" y="144" width="1" height="1" fill="#7A7A7A"/>
<rect x="76" y="146" width="1" height="1" fill="#7A7A7A"/>
<rect x="76" y="148" width="1" height="1" fill="#7A7A7A"/>
<rect x="76" y="150" width="1" height="1" fill="#7A7A7A"/>
<rect x="76" y="152" width="1" height="1" fill="#7A7A7A"/>
<rect x="76" y="154" width="1" height="1" fill="#7A7A7A"/>
<rect x="76" y="156" width="1" height="1" fill="#7A7A7A"/>
<rect x="76" y="158" width="1" height="1" fill="#7A7A7A"/>
<rect x="76" y="160" width="1" height="1" fill="#7A7A7A"/>
<rect x="76" y="162" width="1" height="1" fill="#7A7A7A"/>
<rect x="76" y="164" width="1" height="1" fill="#7A7A7A"/>
<rect x="76" y="166" width="1" height="1" fill="#7A7A7A"/>
<rect x="76" y="168" width="1" height="1" fill="#7A7A7A"/>
<rect x="76" y="170" width="1" height="1" fill="#7A7A7A"/>
<rect x="76" y="172" width="1" height="1" fill="#7A7A7A"/>
<rect x="76" y="174" width="1" height="1" fill="#7A7A7A"/>
<rect x="76" y="176" width="1" height="1" fill="#7A7A7A"/>
<rect x="76" y="178" width="1" height="1" fill="#7A7A7A"/>
<rect x="76" y="180" width="1" height="1" fill="#7A7A7A"/>
<rect x="76" y="182" width="1" height="1" fill="#7A7A7A"/>
<rect x="76" y="184" width="1" height="1" fill="#7A7A7A"/>
<rect x="76" y="186" width="1" height="1" fill="#7A7A7A"/>
<rect x="76" y="188" width="1" height="1" fill="#7A7A7A"/>
<rect x="76" y="190" width="1" height="1" fill="#7A7A7A"/>
<rect x="76" y="192" width="1" height="1" fill="#7A7A7A"/>
<rect x="76" y="194" width="1" height="1" fill="#7A7A7A"/>
<rect x="76" y="196" width="1" height="1" fill="#7A7A7A"/>
<rect x="76" y="198" width="1" height="1" fill="#7A7A7A"/>
<rect x="76" y="200" width="1" height="1" fill="#7A7A7A"/>
<rect x="76" y="202" width="1" height="1" fill="#7A7A7A"/>
<rect x="76" y="204" width="1" height="1" fill="#7A7A7A"/>
<rect x="76" y="206" width="1" height="1" fill="#7A7A7A"/>
<rect x="76" y="208" width="1" height="1" fill="#7A7A7A"/>
<rect x="76" y="210" width="1" height="1" fill="#7A7A7A"/>
<rect x="76" y="212" width="1" height="1" fill="#7A7A7A"/>
<rect x="76" y="214" width="1" height="1" fill="#7A7A7A"/>
<rect x="76" y="216" width="1" height="1" fill="#7A7A7A"/>
<rect x="76" y="218" width="1" height="1" fill="#7A7A7A"/>
<rect x="76" y="220" width="1" height="1" fill="#7A7A7A"/>
<rect x="76" y="222" width="1" height="1" fill="#7A7A7A"/>
<rect x="76" y="224" width="1" height="1" fill="#7A7A7A"/>
<rect x="76" y="226" width="1" height="1" fill="#7A7A7A"/>
<rect x="76" y="228" width="1" height="1" fill="#7A7A7A"/>
<rect x="76" y="230" width="1" height="1" fill="#7A7A7A"/>
<rect x="76" y="232" width="1" height="1" fill="#7A7A7A"/>
<rect x="76" y="234" width="1" height="1" fill="#7A7A7A"/>
<rect x="76" y="236" width="1" height="1" fill="#7A7A7A"/>
<rect x="76" y="238" width="1" height="1" fill="#7A7A7A"/>
<rect x="76" y="240" width="1" height="1" fill="#7A7A7A"/>
<rect x="76" y="242" width="1" height="1" fill="#7A7A7A"/>
<rect x="76" y="244" width="1" height="1" fill="#7A7A7A"/>
<rect x="76" y="246" width="1" height="1" fill="#7A7A7A"/>
<rect x="76" y="248" width="1" height="1" fill="#7A7A7A"/>
<rect x="76" y="250" width="1" height="1" fill="#7A7A7A"/>
<rect x="76" y="252" width="1" height="1" fill="#7A7A7A"/>
<rect x="76" y="254" width="1" height="1" fill="#7A7A7A"/>
<rect x="76" y="256" width="1" height="1" fill="#7A7A7A"/>
<rect x="76" y="258" width="1" height="1" fill="#7A7A7A"/>
<rect x="76" y="260" width="1" height="1" fill="#7A7A7A"/>
<rect x="76" y="262" width="1" height="1" fill="#7A7A7A"/>
<rect x="76" y="264" width="1" height="1" fill="#7A7A7A"/>
<rect x="76" y="266" width="1" height="1" fill="#7A7A7A"/>
<rect x="76" y="268" width="1" height="1" fill="#7A7A7A"/>
<rect x="76" y="270" width="1" height="1" fill="#7A7A7A"/>
<rect x="76" y="272" width="1" height="1" fill="#7A7A7A"/>
<rect x="76" y="274" width="1" height="1" fill="#7A7A7A"/>
<rect x="76" y="276" width="1" height="1" fill="#7A7A7A"/>
<rect x="76" y="278" width="1" height="1" fill="#7A7A7A"/>
<rect x="76" y="280" width="1" height="1" fill="#7A7A7A"/>
<rect x="76" y="282" width="1" height="1" fill="#7A7A7A"/>
<rect x="76" y="284" width="1" height="1" fill="#7A7A7A"/>
<rect x="76" y="286" width="1" height="1" fill="#7A7A7A"/>
<rect x="76" y="288" width="1" height="1" fill="#7A7A7A"/>
<rect x="76" y="290" width="1" height="1" fill="#7A7A7A"/>
<rect x="76" y="292" width="1" height="1" fill="#7A7A7A"/>
<rect x="76" y="294" width="1" height="1" fill="#7A7A7A"/>
<rect x="76" y="296" width="1" height="1" fill="#7A7A7A"/>
<rect x="76" y="298" width="1" height="1" fill="#7A7A7A"/>
<rect x="76" y="300" width="1" height="1" fill="#7A7A7A"/>
<rect x="76" y="302" width="1" height="1" fill="#7A7A7A"/>
<rect x="76" y="304" width="1" height="1" fill="#7A7A7A"/>
<rect x="76" y="306" width="1" height="1" fill="#7A7A7A"/>
<rect x="76" y="308" width="1" height="1" fill="#7A7A7A"/>
<rect x="76" y="310" width="1" height="1" fill="#7A7A7A"/>
<rect x="76" y="312" width="1" height="1" fill="#7A7A7A"/>
<rect x="76" y="314" width="1" height="1" fill="#7A7A7A"/>
<rect x="76" y="316" width="1" height="1" fill="#7A7A7A"/>
<rect x="76" y="318" width="1" height="1" fill="#7A7A7A"/>
<rect x="76" y="320" width="1" height="1" fill="#7A7A7A"/>
<rect x="76" y="322" width="1" height="1" fill="#7A7A7A"/>
<rect x="76" y="324" width="1" height="1" fill="#7A7A7A"/>
<rect x="76" y="326" width="1" height="1" fill="#7A7A7A"/>
<rect x="76" y="328" width="1" height="1" fill="#7A7A7A"/>
<rect x="76" y="330" width="1" height="1" fill="#7A7A7A"/>
<rect x="76" y="332" width="1" height="1" fill="#7A7A7A"/>
<rect x="76" y="334" width="1" height="1" fill="#7A7A7A"/>
<rect x="76" y="336" width="1" height="1" fill="#7A7A7A"/>
<rect x="76" y="338" width="1" height="1" fill="#7A7A7A"/>
<rect x="76" y="340" width="1" height="1" fill="#7A7A7A"/>
<rect x="76" y="342" width="1" height="1" fill="#7A7A7A"/>
<rect x="76" y="344" width="1" height="1" fill="#7A7A7A"/>
<rect x="76" y="346" width="1" height="1" fill="#7A7A7A"/>
<rect x="76" y="348" width="1" height="1" fill="#7A7A7A"/>
<rect x="76" y="350" width="1" height="1" fill="#7A7A7A"/>
<rect x="76" y="352" width="1" height="1" fill="#7A7A7A"/>
<rect x="76" y="354" width="1" height="1" fill="#7A7A7A"/>
<rect x="76" y="356" width="1" height="1" fill="#7A7A7A"/>
<rect x="76" y="358" width="1" height="1" fill="#7A7A7A"/>
<rect x="76" y="360" width="1" height="1" fill="#7A7A7A"/>
<rect x="76" y="362" width="1" height="1" fill="#7A7A7A"/>
<rect x="76" y="364" width="1" height="1" fill="#7A7A7A"/>
<rect x="76" y="366" width="1" height="1" fill="#7A7A7A"/>
<rect x="76" y="368" width="1" height="1" fill="#7A7A7A"/>
<rect x="76" y="370" width="1" height="1" fill="#7A7A7A"/>
<rect x="76" y="372" width="1" height="1" fill="#7A7A7A"/>
<rect x="76" y="374" width="1" height="1" fill="#7A7A7A"/>
<rect x="76" y="376" width="1" height="1" fill="#7A7A7A"/>
<rect x="76" y="378" width="1" height="1" fill="#7A7A7A"/>
<rect x="76" y="380" width="1" height="1" fill="#7A7A7A"/>
<rect x="76" y="382" width="1" height="1" fill="#7A7A7A"/>
<rect x="76" y="384" width="1" height="1" fill="#7A7A7A"/>
<rect x="76" y="386" width="1" height="1" fill="#7A7A7A"/>
<rect x="76" y="388" width="1" height="1" fill="#7A7A7A"/>
<rect x="76" y="390" width="1" height="1" fill="#7A7A7A"/>
<rect x="76" y="392" width="1" height="1" fill="#7A7A7A"/>
<rect x="76" y="394" width="1" height="1" fill="#7A7A7A"/>
<rect x="76" y="396" width="1" height="1" fill="#7A7A7A"/>
<rect x="76" y="398" width="1" height="1" fill="#7A7A7A"/>
<rect x="76" y="400" width="1" height="1" fill="#7A7A7A"/>
<rect x="76" y="402" width="1" height="1" fill="#7A7A7A"/>
<rect x="76" y="404" width="1" height="1" fill="#7A7A7A"/>
<rect x="76" y="406" width="1" height="1" fill="#7A7A7A"/>
<rect x="76" y="408" width="1" height="1" fill="#7A7A7A"/>
<rect x="76" y="410" width="1" height="1" fill="#7A7A7A"/>
<rect x="76" y="412" width="1" height="1" fill="#7A7A7A"/>
<rect x="76" y="414" width="1" height="1" fill="#7A7A7A"/>
<rect x="76" y="416" width="1" height="1" fill="#7A7A7A"/>
<rect x="76" y="418" width="1" height="1" fill="#7A7A7A"/>
<rect x="76" y="420" width="1" height="1" fill="#7A7A7A"/>
<rect x="76" y="422" width="1" height="1" fill="#7A7A7A"/>
<rect x="76" y="424" width="1" height="1" fill="#7A7A7A"/>
<rect x="76" y="426" width="1" height="1" fill="#7A7A7A"/>
<rect x="76" y="428" width="1" height="1" fill="#7A7A7A"/>
<rect x="76" y="430" width="1" height="1" fill="#7A7A7A"/>
<rect x="76" y="432" width="1" height="1" fill="#7A7A7A"/>
<rect x="76" y="434" width="1" height="1" fill="#7A7A7A"/>
<rect x="76" y="436" width="1" height="1" fill="#7A7A7A"/>
<rect x="76" y="438" width="1" height="1" fill="#7A7A7A"/>
<rect x="76" y="440" width="1" height="1" fill="#7A7A7A"/>
<rect x="76" y="442" width="1" height="1" fill="#7A7A7A"/>
<rect x="76" y="444" width="1" height="1" fill="#7A7A7A"/>
<rect x="76" y="446" width="1" height="1" fill="#7A7A7A"/>
<rect x="76" y="448" width="1" height="1" fill="#7A7A7A"/>
<rect x="76" y="450" width="1" height="1" fill="#7A7A7A"/>
<rect x="76" y="452" width="1" height="1" fill="#7A7A7A"/>
<rect x="76" y="454" width="1" height="1" fill="#7A7A7A"/>
<rect x="76" y="456" width="1" height="1" fill="#7A7A7A"/>
<rect x="76" y="458" width="1" height="1" fill="#7A7A7A"/>
<rect x="76" y="460" width="1" height="1" fill="#7A7A7A"/>
<rect x="76" y="462" width="1" height="1" fill="#7A7A7A"/>
<rect x="76" y="464" width="1" height="1" fill="#7A7A7A"/>
<rect x="76" y="466" width="1" height="1" fill="#7A7A7A"/>
<rect x="76" y="468" width="1" height="1" fill="#7A7A7A"/>
<rect x="76" y="470" width="1" height="1" fill="#7A7A7A"/>
<rect x="76" y="472" width="1" height="1" fill="#7A7A7A"/>
<rect x="76" y="474" width="1" height="1" fill="#7A7A7A"/>
<rect x="76" y="476" width="1" height="1" fill="#7A7A7A"/>
<rect x="76" y="478" width="1" height="1" fill="#7A7A7A"/>
<rect x="76" y="480" width="1" height="1" fill="#7A7A7A"/>
<rect x="76" y="482" width="1" height="1" fill="#7A7A7A"/>
<rect x="76" y="484" width="1" height="1" fill="#7A7A7A"/>
<rect x="76" y="486" width="1" height="1" fill="#7A7A7A"/>
<rect x="76" y="488" width="1" height="1" fill="#7A7A7A"/>
<rect x="76" y="490" width="1" height="1" fill="#7A7A7A"/>
<rect x="76" y="492" width="1" height="1" fill="#7A7A7A"/>
<rect x="76" y="494" width="1" height="1" fill="#7A7A7A"/>
<rect x="76" y="496" width="1" height="1" fill="#7A7A7A"/>
<rect x="76" y="498" width="1" height="1" fill="#7A7A7A"/>
<rect x="76" y="500" width="1" height="1" fill="#7A7A7A"/>
<rect x="76" y="502" width="1" height="1" fill="#7A7A7A"/>
<rect x="76" y="504" width="1" height="1" fill="#7A7A7A"/>
<rect x="76" y="506" width="1" height="1" fill="#7A7A7A"/>
<rect x="76" y="508" width="1" height="1" fill="#7A7A7A"/>
<rect x="76" y="510" width="1" height="1" fill="#7A7A7A"/>
<rect x="76" y="512" width="1" height="1" fill="#7A7A7A"/>
<rect x="76" y="514" width="1" height="1" fill="#7A7A7A"/>
<rect x="76" y="516" width="1" height="1" fill="#7A7A7A"/>
<rect x="76" y="518" width="1" height="1" fill="#7A7A7A"/>
<rect x="76" y="520" width="1" height="1" fill="#7A7A7A"/>
<rect x="76" y="522" width="1" height="1" fill="#7A7A7A"/>
<rect x="76" y="524" width="1" height="1" fill="#7A7A7A"/>
<rect x="76" y="526" width="1" height="1" fill="#7A7A7A"/>
<rect x="76" y="528" width="1" height="1" fill="#7A7A7A"/>
<rect x="76" y="530" width="1" height="1" fill="#7A7A7A"/>
<rect x="76" y="532" width="1" height="1" fill="#7A7A7A"/>
<rect x="76" y="534" width="1" height="1" fill="#7A7A7A"/>
<rect x="76" y="536" width="1" height="1" fill="#7A7A7A"/>
<rect x="76" y="538" width="1" height="1" fill="#7A7A7A"/>
<rect x="76" y="540" width="1" height="1" fill="#7A7A7A"/>
<rect x="76" y="542" width="1" height="1" fill="#7A7A7A"/>
<rect x="76" y="544" width="1" height="1" fill="#7A7A7A"/>
<rect x="76" y="546" width="1" height="1" fill="#7A7A7A"/>
<rect x="76" y="548" width="1" height="1" fill="#7A7A7A"/>
<rect x="76" y="550" width="1" height="1" fill="#7A7A7A"/>
<rect x="76" y="552" width="1" height="1" fill="#7A7A7A"/>
<rect x="76" y="554" width="1" height="1" fill="#7A7A7A"/>
<rect x="76" y="556" width="1" height="1" fill="#7A7A7A"/>
<rect x="76" y="558" width="1" height="1" fill="#7A7A7A"/>
<rect x="76" y="560" width="1" height="1" fill="#7A7A7A"/>
<rect x="76" y="562" width="1" height="1" fill="#7A7A7A"/>
<rect x="76" y="564" width="1" height="1" fill="#7A7A7A"/>
<rect x="96" y="122" width="1" height="1" fill="#7A7A7A"/>
<rect x="96" y="124" width="1" height="1" fill="#7A7A7A"/>
<rect x="96" y="126" width="1" height="1" fill="#7A7A7A"/>
<rect x="96" y="128" width="1" height="1" fill="#7A7A7A"/>
<rect x="96" y="130" width="1" height="1" fill="#7A7A7A"/>
<rect x="96" y="132" width="1" height="1" fill="#7A7A7A"/>
<rect x="96" y="134" width="1" height="1" fill="#7A7A7A"/>
<rect x="96" y="136" width="1" height="1" fill="#7A7A7A"/>
<rect x="96" y="138" width="1" height="1" fill="#7A7A7A"/>
<rect x="96" y="140" width="1" height="1" fill="#7A7A7A"/>
<rect x="96" y="142" width="1" height="1" fill="#7A7A7A"/>
<rect x="96" y="144" width="1" height="1" fill="#7A7A7A"/>
<rect x="96" y="146" width="1" height="1" fill="#7A7A7A"/>
<rect x="96" y="148" width="1" height="1" fill="#7A7A7A"/>
<rect x="96" y="150" width="1" height="1" fill="#7A7A7A"/>
<rect x="96" y="152" width="1" height="1" fill="#7A7A7A"/>
<rect x="96" y="154" width="1" height="1" fill="#7A7A7A"/>
<rect x="96" y="156" width="1" height="1" fill="#7A7A7A"/>
<rect x="96" y="158" width="1" height="1" fill="#7A7A7A"/>
<rect x="96" y="160" width="1" height="1" fill="#7A7A7A"/>
<rect x="96" y="162" width="1" height="1" fill="#7A7A7A"/>
<rect x="96" y="164" width="1" height="1" fill="#7A7A7A"/>
<rect x="96" y="166" width="1" height="1" fill="#7A7A7A"/>
<rect x="96" y="168" width="1" height="1" fill="#7A7A7A"/>
<rect x="96" y="170" width="1" height="1" fill="#7A7A7A"/>
<rect x="96" y="172" width="1" height="1" fill="#7A7A7A"/>
<rect x="96" y="174" width="1" height="1" fill="#7A7A7A"/>
<rect x="96" y="176" width="1" height="1" fill="#7A7A7A"/>
<rect x="96" y="178" width="1" height="1" fill="#7A7A7A"/>
<rect x="96" y="180" width="1" height="1" fill="#7A7A7A"/>
<rect x="96" y="182" width="1" height="1" fill="#7A7A7A"/>
<rect x="96" y="184" width="1" height="1" fill="#7A7A7A"/>
<rect x="96" y="186" width="1" height="1" fill="#7A7A7A"/>
<rect x="96" y="188" width="1" height="1" fill="#7A7A7A"/>
<rect x="96" y="190" width="1" height="1" fill="#7A7A7A"/>
<rect x="96" y="192" width="1" height="1" fill="#7A7A7A"/>
<rect x="96" y="194" width="1" height="1" fill="#7A7A7A"/>
<rect x="96" y="196" width="1" height="1" fill="#7A7A7A"/>
<rect x="96" y="198" width="1" height="1" fill="#7A7A7A"/>
<rect x="96" y="200" width="1" height="1" fill="#7A7A7A"/>
<rect x="96" y="202" width="1" height="1" fill="#7A7A7A"/>
<rect x="96" y="204" width="1" height="1" fill="#7A7A7A"/>
<rect x="96" y="206" width="1" height="1" fill="#7A7A7A"/>
<rect x="96" y="208" width="1" height="1" fill="#7A7A7A"/>
<rect x="96" y="210" width="1" height="1" fill="#7A7A7A"/>
<rect x="96" y="212" width="1" height="1" fill="#7A7A7A"/>
<rect x="96" y="214" width="1" height="1" fill="#7A7A7A"/>
<rect x="96" y="216" width="1" height="1" fill="#7A7A7A"/>
<rect x="96" y="218" width="1" height="1" fill="#7A7A7A"/>
<rect x="96" y="220" width="1" height="1" fill="#7A7A7A"/>
<rect x="96" y="222" width="1" height="1" fill="#7A7A7A"/>
<rect x="96" y="224" width="1" height="1" fill="#7A7A7A"/>
<rect x="96" y="226" width="1" height="1" fill="#7A7A7A"/>
<rect x="96" y="228" width="1" height="1" fill="#7A7A7A"/>
<rect x="96" y="230" width="1" height="1" fill="#7A7A7A"/>
<rect x="96" y="232" width="1" height="1" fill="#7A7A7A"/>
<rect x="96" y="234" width="1" height="1" fill="#7A7A7A"/>
<rect x="96" y="236" width="1" height="1" fill="#7A7A7A"/>
<rect x="96" y="238" width="1" height="1" fill="#7A7A7A"/>
<rect x="96" y="240" width="1" height="1" fill="#7A7A7A"/>
<rect x="96" y="242" width="1" height="1" fill="#7A7A7A"/>
<rect x="96" y="244" width="1" height="1" fill="#7A7A7A"/>
<rect x="96" y="246" width="1" height="1" fill="#7A7A7A"/>
<rect x="96" y="248" width="1" height="1" fill="#7A7A7A"/>
<rect x="96" y="250" width="1" height="1" fill="#7A7A7A"/>
<rect x="96" y="252" width="1" height="1" fill="#7A7A7A"/>
<rect x="96" y="254" width="1" height="1" fill="#7A7A7A"/>
<rect x="96" y="256" width="1" height="1" fill="#7A7A7A"/>
<rect x="96" y="258" width="1" height="1" fill="#7A7A7A"/>
<rect x="96" y="260" width="1" height="1" fill="#7A7A7A"/>
<rect x="96" y="262" width="1" height="1" fill="#7A7A7A"/>
<rect x="96" y="264" width="1" height="1" fill="#7A7A7A"/>
<rect x="96" y="266" width="1" height="1" fill="#7A7A7A"/>
<rect x="96" y="268" width="1" height="1" fill="#7A7A7A"/>
<rect x="96" y="270" width="1" height="1" fill="#7A7A7A"/>
<rect x="96" y="272" width="1" height="1" fill="#7A7A7A"/>
<rect x="96" y="274" width="1" height="1" fill="#7A7A7A"/>
<rect x="96" y="276" width="1" height="1" fill="#7A7A7A"/>
<rect x="96" y="278" width="1" height="1" fill="#7A7A7A"/>
<rect x="96" y="280" width="1" height="1" fill="#7A7A7A"/>
<rect x="96" y="282" width="1" height="1" fill="#7A7A7A"/>
<rect x="96" y="284" width="1" height="1" fill="#7A7A7A"/>
<rect x="96" y="286" width="1" height="1" fill="#7A7A7A"/>
<rect x="96" y="288" width="1" height="1" fill="#7A7A7A"/>
<rect x="96" y="290" width="1" height="1" fill="#7A7A7A"/>
<rect x="96" y="292" width="1" height="1" fill="#7A7A7A"/>
<rect x="96" y="294" width="1" height="1" fill="#7A7A7A"/>
<rect x="96" y="296" width="1" height="1" fill="#7A7A7A"/>
<rect x="96" y="298" width="1" height="1" fill="#7A7A7A"/>
<rect x="96" y="300" width="1" height="1" fill="#7A7A7A"/>
<rect x="96" y="302" width="1" height="1" fill="#7A7A7A"/>
<rect x="96" y="304" width="1" height="1" fill="#7A7A7A"/>
<rect x="96" y="306" width="1" height="1" fill="#7A7A7A"/>
<rect x="96" y="308" width="1" height="1" fill="#7A7A7A"/>
<rect x="96" y="310" width="1" height="1" fill="#7A7A7A"/>
<rect x="96" y="312" width="1" height="1" fill="#7A7A7A"/>
<rect x="96" y="314" width="1" height="1" fill="#7A7A7A"/>
<rect x="96" y="316" width="1" height="1" fill="#7A7A7A"/>
<rect x="96" y="318" width="1" height="1" fill="#7A7A7A"/>
<rect x="96" y="320" width="1" height="1" fill="#7A7A7A"/>
<rect x="96" y="322" width="1" height="1" fill="#7A7A7A"/>
<rect x="96" y="324" width="1" height="1" fill="#7A7A7A"/>
<rect x="96" y="326" width="1" height="1" fill="#7A7A7A"/>
<rect x="96" y="328" width="1" height="1" fill="#7A7A7A"/>
<rect x="96" y="330" width="1" height="1" fill="#7A7A7A"/>
<rect x="96" y="332" width="1" height="1" fill="#7A7A7A"/>
<rect x="96" y="334" width="1" height="1" fill="#7A7A7A"/>
<rect x="96" y="336" width="1" height="1" fill="#7A7A7A"/>
<rect x="96" y="338" width="1" height="1" fill="#7A7A7A"/>
<rect x="96" y="340" width="1" height="1" fill="#7A7A7A"/>
<rect x="96" y="342" width="1" height="1" fill="#7A7A7A"/>
<rect x="96" y="344" width="1" height="1" fill="#7A7A7A"/>
<rect x="96" y="346" width="1" height="1" fill="#7A7A7A"/>
<rect x="96" y="348" width="1" height="1" fill="#7A7A7A"/>
<rect x="96" y="350" width="1" height="1" fill="#7A7A7A"/>
<rect x="96" y="352" width="1" height="1" fill="#7A7A7A"/>
<rect x="96" y="354" width="1" height="1" fill="#7A7A7A"/>
<rect x="96" y="356" width="1" height="1" fill="#7A7A7A"/>
<rect x="96" y="358" width="1" height="1" fill="#7A7A7A"/>
<rect x="96" y="360" width="1" height="1" fill="#7A7A7A"/>
<rect x="96" y="362" width="1" height="1" fill="#7A7A7A"/>
<rect x="96" y="364" width="1" height="1" fill="#7A7A7A"/>
<rect x="96" y="366" width="1" height="1" fill="#7A7A7A"/>
<rect x="96" y="368" width="1" height="1" fill="#7A7A7A"/>
<rect x="96" y="370" width="1" height="1" fill="#7A7A7A"/>
<rect x="96" y="372" width="1" height="1" fill="#7A7A7A"/>
<rect x="96" y="374" width="1" height="1" fill="#7A7A7A"/>
<rect x="96" y="376" width="1" height="1" fill="#7A7A7A"/>
<rect x="96" y="378" width="1" height="1" fill="#7A7A7A"/>
<rect x="96" y="380" width="1" height="1" fill="#7A7A7A"/>
<rect x="96" y="382" width="1" height="1" fill="#7A7A7A"/>
<rect x="96" y="384" width="1" height="1" fill="#7A7A7A"/>
<rect x="96" y="386" width="1" height="1" fill="#7A7A7A"/>
<rect x="96" y="388" width="1" height="1" fill="#7A7A7A"/>
<rect x="96" y="390" width="1" height="1" fill="#7A7A7A"/>
<rect x="96" y="392" width="1" height="1" fill="#7A7A7A"/>
<rect x="96" y="394" width="1" height="1" fill="#7A7A7A"/>
<rect x="96" y="396" width="1" height="1" fill="#7A7A7A"/>
<rect x="96" y="398" width="1" height="1" fill="#7A7A7A"/>
<rect x="96" y="400" width="1" height="1" fill="#7A7A7A"/>
<rect x="96" y="424" width="1" height="1" fill="#7A7A7A"/>
<rect x="96" y="426" width="1" height="1" fill="#7A7A7A"/>
<rect x="96" y="428" width="1" height="1" fill="#7A7A7A"/>
<rect x="96" y="430" width="1" height="1" fill="#7A7A7A"/>
<rect x="96" y="432" width="1" height="1" fill="#7A7A7A"/>
<rect x="96" y="434" width="1" height="1" fill="#7A7A7A"/>
<rect x="96" y="436" width="1" height="1" fill="#7A7A7A"/>
<rect x="96" y="438" width="1" height="1" fill="#7A7A7A"/>
<rect x="96" y="440" width="1" height="1" fill="#7A7A7A"/>
<rect x="96" y="442" width="1" height="1" fill="#7A7A7A"/>
<rect x="96" y="444" width="1" height="1" fill="#7A7A7A"/>
<rect x="96" y="446" width="1" height="1" fill="#7A7A7A"/>
<rect x="96" y="448" width="1" height="1" fill="#7A7A7A"/>
<rect x="96" y="450" width="1" height="1" fill="#7A7A7A"/>
<rect x="96" y="452" width="1" height="1" fill="#7A7A7A"/>
<rect x="96" y="454" width="1" height="1" fill="#7A7A7A"/>
<rect x="96" y="456" width="1" height="1" fill="#7A7A7A"/>
<rect x="96" y="458" width="1" height="1" fill="#7A7A7A"/>
<rect x="96" y="460" width="1" height="1" fill="#7A7A7A"/>
<rect x="96" y="462" width="1" height="1" fill="#7A7A7A"/>
<rect x="96" y="464" width="1" height="1" fill="#7A7A7A"/>
<rect x="96" y="466" width="1" height="1" fill="#7A7A7A"/>
<rect x="96" y="468" width="1" height="1" fill="#7A7A7A"/>
<rect x="96" y="470" width="1" height="1" fill="#7A7A7A"/>
<rect x="96" y="472" width="1" height="1" fill="#7A7A7A"/>
<rect x="96" y="474" width="1" height="1" fill="#7A7A7A"/>
<rect x="96" y="476" width="1" height="1" fill="#7A7A7A"/>
<rect x="96" y="478" width="1" height="1" fill="#7A7A7A"/>
<rect x="96" y="480" width="1" height="1" fill="#7A7A7A"/>
<rect x="96" y="482" width="1" height="1" fill="#7A7A7A"/>
<rect x="96" y="484" width="1" height="1" fill="#7A7A7A"/>
<rect x="96" y="486" width="1" height="1" fill="#7A7A7A"/>
<rect x="96" y="488" width="1" height="1" fill="#7A7A7A"/>
<rect x="96" y="490" width="1" height="1" fill="#7A7A7A"/>
<rect x="96" y="492" width="1" height="1" fill="#7A7A7A"/>
<rect x="96" y="494" width="1" height="1" fill="#7A7A7A"/>
<rect x="96" y="496" width="1" height="1" fill="#7A7A7A"/>
<rect x="96" y="498" width="1" height="1" fill="#7A7A7A"/>
<rect x="96" y="500" width="1" height="1" fill="#7A7A7A"/>
<rect x="96" y="502" width="1" height="1" fill="#7A7A7A"/>
<rect x="96" y="504" width="1" height="1" fill="#7A7A7A"/>
<rect x="96" y="506" width="1" height="1" fill="#7A7A7A"/>
<rect x="96" y="508" width="1" height="1" fill="#7A7A7A"/>
<rect x="96" y="510" width="1" height="1" fill="#7A7A7A"/>
<rect x="96" y="512" width="1" height="1" fill="#7A7A7A"/>
<rect x="96" y="514" width="1" height="1" fill="#7A7A7A"/>
<rect x="96" y="516" width="1" height="1" fill="#7A7A7A"/>
<rect x="96" y="518" width="1" height="1" fill="#7A7A7A"/>
<rect x="96" y="520" width="1" height="1" fill="#7A7A7A"/>
<rect x="96" y="522" width="1" height="1" fill="#7A7A7A"/>
<rect x="96" y="524" width="1" height="1" fill="#7A7A7A"/>
<rect x="96" y="526" width="1" height="1" fill="#7A7A7A"/>
<rect x="96" y="528" width="1" height="1" fill="#7A7A7A"/>
<rect x="96" y="530" width="1" height="1" fill="#7A7A7A"/>
<rect x="96" y="532" width="1" height="1" fill="#7A7A7A"/>
<rect x="96" y="534" width="1" height="1" fill="#7A7A7A"/>
<rect x="96" y="536" width="1" height="1" fill="#7A7A7A"/>
<rect x="96" y="538" width="1" height="1" fill="#7A7A7A"/>
<rect x="96" y="540" width="1" height="1" fill="#7A7A7A"/>
<rect x="96" y="542" width="1" height="1" fill="#7A7A7A"/>
<rect x="96" y="544" width="1" height="1" fill="#7A7A7A"/>
<rect x="96" y="546" width="1" height="1" fill="#7A7A7A"/>
<rect x="96" y="548" width="1" height="1" fill="#7A7A7A"/>
<rect x="96" y="550" width="1" height="1" fill="#7A7A7A"/>
<rect x="96" y="552" width="1" height="1" fill="#7A7A7A"/>
<rect x="96" y="554" width="1" height="1" fill="#7A7A7A"/>
<rect x="96" y="556" width="1" height="1" fill="#7A7A7A"/>
<rect x="96" y="558" width="1" height="1" fill="#7A7A7A"/>
<rect x="96" y="560" width="1" height="1" fill="#7A7A7A"/>
<rect x="96" y="562" width="1" height="1" fill="#7A7A7A"/>
<rect x="96" y="564" width="1" height="1" fill="#7A7A7A"/>
<polygon points="52,56.5 52,66.5 61,61.5" fill="#707070"/>
<rect x="62" y="61" width="1" height="1" fill="#7A7A7A"/>
<rect x="64" y="61" width="1" height="1" fill="#7A7A7A"/>
<rect x="66" y="61" width="1" height="1" fill="#7A7A7A"/>
<rect x="68" y="61" width="1" height="1" fill="#7A7A7A"/>
<circle cx="77.0" cy="61.0" r="6.2" fill="#C99D2E"/>
<rect x="74" y="58" width="6" height="1" fill="#FFFFFF"/>
<rect x="74" y="60" width="6" height="1" fill="#FFFFFF"/>
<rect x="74" y="62" width="6" height="1" fill="#FFFFFF"/>
<text x="85.52" y="66" font-size="14.56" fill="#000" stroke="#000" stroke-width="0.4" textLength="191.42" lengthAdjust="spacingAndGlyphs">sunday_morning_activity</text>
<polygon points="52,73.5 52,83.5 61,78.5" fill="#707070"/>
<rect x="62" y="78" width="1" height="1" fill="#7A7A7A"/>
<rect x="64" y="78" width="1" height="1" fill="#7A7A7A"/>
<rect x="66" y="78" width="1" height="1" fill="#7A7A7A"/>
<rect x="68" y="78" width="1" height="1" fill="#7A7A7A"/>
<circle cx="77.0" cy="78.0" r="6.2" fill="#C99D2E"/>
<rect x="74" y="75" width="6" height="1" fill="#FFFFFF"/>
<rect x="74" y="77" width="6" height="1" fill="#FFFFFF"/>
<rect x="74" y="79" width="6" height="1" fill="#FFFFFF"/>
<text x="85.52" y="83" font-size="14.56" fill="#000" stroke="#000" stroke-width="0.4" textLength="166.22" lengthAdjust="spacingAndGlyphs">sunday_night_activity</text>
<polygon points="51.2,90.8 61.8,90.8 56.5,100.4" fill="#707070"/>
<rect x="62" y="95" width="1" height="1" fill="#7A7A7A"/>
<rect x="64" y="95" width="1" height="1" fill="#7A7A7A"/>
<rect x="66" y="95" width="1" height="1" fill="#7A7A7A"/>
<rect x="68" y="95" width="1" height="1" fill="#7A7A7A"/>
<circle cx="77.0" cy="95.0" r="6.2" fill="#C99D2E"/>
<rect x="74" y="92" width="6" height="1" fill="#FFFFFF"/>
<rect x="74" y="94" width="6" height="1" fill="#FFFFFF"/>
<rect x="74" y="96" width="6" height="1" fill="#FFFFFF"/>
<text x="86.03" y="100" font-size="14.56" fill="#000" stroke="#000" stroke-width="0.4" textLength="214.81" lengthAdjust="spacingAndGlyphs">workday_afternoon_activity</text>
<polygon points="71.2,107.8 81.8,107.8 76.5,117.4" fill="#707070"/>
<rect x="82" y="112" width="1" height="1" fill="#7A7A7A"/>
<rect x="84" y="112" width="1" height="1" fill="#7A7A7A"/>
<rect x="86" y="112" width="1" height="1" fill="#7A7A7A"/>
<rect x="88" y="112" width="1" height="1" fill="#7A7A7A"/>
<circle cx="97.0" cy="112.0" r="6.2" fill="#C99D2E"/>
<rect x="94" y="109" width="6" height="1" fill="#FFFFFF"/>
<rect x="94" y="111" width="6" height="1" fill="#FFFFFF"/>
<rect x="94" y="113" width="6" height="1" fill="#FFFFFF"/>
<text x="106.03" y="117" font-size="14.56" fill="#000" stroke="#000" stroke-width="0.4" textLength="260.31" lengthAdjust="spacingAndGlyphs">workday_early_afternoon_activity</text>
<rect x="98" y="129" width="1" height="1" fill="#7A7A7A"/>
<rect x="100" y="129" width="1" height="1" fill="#7A7A7A"/>
<rect x="102" y="129" width="1" height="1" fill="#7A7A7A"/>
<rect x="104" y="129" width="1" height="1" fill="#7A7A7A"/>
<rect x="106" y="129" width="1" height="1" fill="#7A7A7A"/>
<rect x="108" y="129" width="1" height="1" fill="#7A7A7A"/>
<circle cx="117" cy="129" r="6.2" fill="#C99D2E"/>
<text x="125.28" y="134" font-size="14.56" fill="#000" stroke="#000" stroke-width="0.4" textLength="178.55" lengthAdjust="spacingAndGlyphs">doing_a_house_activity</text>
<polygon points="92,141.5 92,151.5 101,146.5" fill="#707070"/>
<rect x="102" y="146" width="1" height="1" fill="#7A7A7A"/>
<rect x="104" y="146" width="1" height="1" fill="#7A7A7A"/>
<rect x="106" y="146" width="1" height="1" fill="#7A7A7A"/>
<rect x="108" y="146" width="1" height="1" fill="#7A7A7A"/>
<circle cx="117" cy="146" r="6.2" fill="#C99D2E"/>
<text x="125.25" y="151" font-size="14.56" fill="#000" stroke="#000" stroke-width="0.4" textLength="140.49" lengthAdjust="spacingAndGlyphs">education_activity</text>
<rect x="98" y="163" width="1" height="1" fill="#7A7A7A"/>
<rect x="100" y="163" width="1" height="1" fill="#7A7A7A"/>
<rect x="102" y="163" width="1" height="1" fill="#7A7A7A"/>
<rect x="104" y="163" width="1" height="1" fill="#7A7A7A"/>
<rect x="106" y="163" width="1" height="1" fill="#7A7A7A"/>
<rect x="108" y="163" width="1" height="1" fill="#7A7A7A"/>
<circle cx="117" cy="163" r="6.2" fill="#C99D2E"/>
<text x="124.78" y="168" font-size="14.56" fill="#000" stroke="#000" stroke-width="0.4" textLength="185.36" lengthAdjust="spacingAndGlyphs">having_sightseeing_trip</text>
<polygon points="92,175.5 92,185.5 101,180.5" fill="#707070"/>
<rect x="102" y="180" width="1" height="1" fill="#7A7A7A"/>
<rect x="104" y="180" width="1" height="1" fill="#7A7A7A"/>
<rect x="106" y="180" width="1" height="1" fill="#7A7A7A"/>
<rect x="108" y="180" width="1" height="1" fill="#7A7A7A"/>
<circle cx="117" cy="180" r="6.2" fill="#C99D2E"/>
<text x="125.25" y="185" font-size="14.56" fill="#000" stroke="#000" stroke-width="0.4" textLength="175.48" lengthAdjust="spacingAndGlyphs">outdoor_other_activity</text>
<polygon points="92,192.5 92,202.5 101,197.5" fill="#707070"/>
<rect x="102" y="197" width="1" height="1" fill="#7A7A7A"/>
<rect x="104" y="197" width="1" height="1" fill="#7A7A7A"/>
<rect x="106" y="197" width="1" height="1" fill="#7A7A7A"/>
<rect x="108" y="197" width="1" height="1" fill="#7A7A7A"/>
<circle cx="117" cy="197" r="6.2" fill="#C99D2E"/>
<text x="124.87" y="202" font-size="14.56" fill="#000" stroke="#000" stroke-width="0.4" textLength="111.01" lengthAdjust="spacingAndGlyphs">personal_care</text>
<polygon points="92,209.5 92,219.5 101,214.5" fill="#707070"/>
<rect x="102" y="214" width="1" height="1" fill="#7A7A7A"/>
<rect x="104" y="214" width="1" height="1" fill="#7A7A7A"/>
<rect x="106" y="214" width="1" height="1" fill="#7A7A7A"/>
<rect x="108" y="214" width="1" height="1" fill="#7A7A7A"/>
<circle cx="117" cy="214" r="6.2" fill="#C99D2E"/>
<text x="124.82" y="219" font-size="14.56" fill="#000" stroke="#000" stroke-width="0.4" textLength="140.91" lengthAdjust="spacingAndGlyphs">relaxation_activity</text>
<polygon points="92,226.5 92,236.5 101,231.5" fill="#707070"/>
<rect x="102" y="231" width="1" height="1" fill="#7A7A7A"/>
<rect x="104" y="231" width="1" height="1" fill="#7A7A7A"/>
<rect x="106" y="231" width="1" height="1" fill="#7A7A7A"/>
<rect x="108" y="231" width="1" height="1" fill="#7A7A7A"/>
<circle cx="117" cy="231" r="6.2" fill="#C99D2E"/>
<text x="124.81" y="236" font-size="14.56" fill="#000" stroke="#000" stroke-width="0.4" textLength="131.12" lengthAdjust="spacingAndGlyphs">religious_activity</text>
<polygon points="92,243.5 92,253.5 101,248.5" fill="#707070"/>
<rect x="102" y="248" width="1" height="1" fill="#7A7A7A"/>
<rect x="104" y="248" width="1" height="1" fill="#7A7A7A"/>
<rect x="106" y="248" width="1" height="1" fill="#7A7A7A"/>
<rect x="108" y="248" width="1" height="1" fill="#7A7A7A"/>
<circle cx="117" cy="248" r="6.2" fill="#C99D2E"/>
<text x="125.52" y="253" font-size="14.56" fill="#000" stroke="#000" stroke-width="0.4" textLength="179.81" lengthAdjust="spacingAndGlyphs">services_and_business</text>
<polygon points="92,260.5 92,270.5 101,265.5" fill="#707070"/>
<rect x="102" y="265" width="1" height="1" fill="#7A7A7A"/>
<rect x="104" y="265" width="1" height="1" fill="#7A7A7A"/>
<rect x="106" y="265" width="1" height="1" fill="#7A7A7A"/>
<rect x="108" y="265" width="1" height="1" fill="#7A7A7A"/>
<circle cx="117" cy="265" r="6.2" fill="#C99D2E"/>
<text x="125.50" y="270" font-size="14.56" fill="#000" stroke="#000" stroke-width="0.4" textLength="72.75" lengthAdjust="spacingAndGlyphs">shopping</text>
<polygon points="92,277.5 92,287.5 101,282.5" fill="#707070"/>
<rect x="102" y="282" width="1" height="1" fill="#7A7A7A"/>
<rect x="104" y="282" width="1" height="1" fill="#7A7A7A"/>
<rect x="106" y="282" width="1" height="1" fill="#7A7A7A"/>
<rect x="108" y="282" width="1" height="1" fill="#7A7A7A"/>
<circle cx="117" cy="282" r="6.2" fill="#C99D2E"/>
<text x="125.48" y="287" font-size="14.56" fill="#000" stroke="#000" stroke-width="0.4" textLength="66.12" lengthAdjust="spacingAndGlyphs">sporting</text>
<polygon points="92,294.5 92,304.5 101,299.5" fill="#707070"/>
<rect x="102" y="299" width="1" height="1" fill="#7A7A7A"/>
<rect x="104" y="299" width="1" height="1" fill="#7A7A7A"/>
<rect x="106" y="299" width="1" height="1" fill="#7A7A7A"/>
<rect x="108" y="299" width="1" height="1" fill="#7A7A7A"/>
<circle cx="117" cy="299" r="6.2" fill="#C99D2E"/>
<text x="125.73" y="304" font-size="14.56" fill="#000" stroke="#000" stroke-width="0.4" textLength="178.20" lengthAdjust="spacingAndGlyphs">travelling_by_transport</text>
<rect x="98" y="316" width="1" height="1" fill="#7A7A7A"/>
<rect x="100" y="316" width="1" height="1" fill="#7A7A7A"/>
<rect x="102" y="316" width="1" height="1" fill="#7A7A7A"/>
<rect x="104" y="316" width="1" height="1" fill="#7A7A7A"/>
<rect x="106" y="316" width="1" height="1" fill="#7A7A7A"/>
<rect x="108" y="316" width="1" height="1" fill="#7A7A7A"/>
<circle cx="117" cy="316" r="6.2" fill="#C99D2E"/>
<text x="125.94" y="321" font-size="14.56" fill="#000" stroke="#000" stroke-width="0.4" textLength="187.30" lengthAdjust="spacingAndGlyphs">visiting_a_clinic_hospital</text>
<rect x="98" y="333" width="1" height="1" fill="#7A7A7A"/>
<rect x="100" y="333" width="1" height="1" fill="#7A7A7A"/>
<rect x="102" y="333" width="1" height="1" fill="#7A7A7A"/>
<rect x="104" y="333" width="1" height="1" fill="#7A7A7A"/>
<rect x="106" y="333" width="1" height="1" fill="#7A7A7A"/>
<rect x="108" y="333" width="1" height="1" fill="#7A7A7A"/>
<circle cx="117" cy="333" r="6.2" fill="#C99D2E"/>
<text x="125.94" y="338" font-size="14.56" fill="#000" stroke="#000" stroke-width="0.4" textLength="130.19" lengthAdjust="spacingAndGlyphs">visiting_a_gallery</text>
<rect x="98" y="350" width="1" height="1" fill="#7A7A7A"/>
<rect x="100" y="350" width="1" height="1" fill="#7A7A7A"/>
<rect x="102" y="350" width="1" height="1" fill="#7A7A7A"/>
<rect x="104" y="350" width="1" height="1" fill="#7A7A7A"/>
<rect x="106" y="350" width="1" height="1" fill="#7A7A7A"/>
<rect x="108" y="350" width="1" height="1" fill="#7A7A7A"/>
<circle cx="117" cy="350" r="6.2" fill="#C99D2E"/>
<text x="125.94" y="355" font-size="14.56" fill="#000" stroke="#000" stroke-width="0.4" textLength="145.38" lengthAdjust="spacingAndGlyphs">visiting_a_museum</text>
<rect x="98" y="367" width="1" height="1" fill="#7A7A7A"/>
<rect x="100" y="367" width="1" height="1" fill="#7A7A7A"/>
<rect x="102" y="367" width="1" height="1" fill="#7A7A7A"/>
<rect x="104" y="367" width="1" height="1" fill="#7A7A7A"/>
<rect x="106" y="367" width="1" height="1" fill="#7A7A7A"/>
<rect x="108" y="367" width="1" height="1" fill="#7A7A7A"/>
<circle cx="117" cy="367" r="6.2" fill="#C99D2E"/>
<text x="125.94" y="372" font-size="14.56" fill="#000" stroke="#000" stroke-width="0.4" textLength="154.59" lengthAdjust="spacingAndGlyphs">visiting_a_pharmacy</text>
<rect x="98" y="384" width="1" height="1" fill="#7A7A7A"/>
<rect x="100" y="384" width="1" height="1" fill="#7A7A7A"/>
<rect x="102" y="384" width="1" height="1" fill="#7A7A7A"/>
<rect x="104" y="384" width="1" height="1" fill="#7A7A7A"/>
<rect x="106" y="384" width="1" height="1" fill="#7A7A7A"/>
<rect x="108" y="384" width="1" height="1" fill="#7A7A7A"/>
<circle cx="117" cy="384" r="6.2" fill="#C99D2E"/>
<text x="125.94" y="389" font-size="14.56" fill="#000" stroke="#000" stroke-width="0.4" textLength="175.11" lengthAdjust="spacingAndGlyphs">visiting_a_special_care</text>
<polygon points="92,396.5 92,406.5 101,401.5" fill="#707070"/>
<rect x="102" y="401" width="1" height="1" fill="#7A7A7A"/>
<rect x="104" y="401" width="1" height="1" fill="#7A7A7A"/>
<rect x="106" y="401" width="1" height="1" fill="#7A7A7A"/>
<rect x="108" y="401" width="1" height="1" fill="#7A7A7A"/>
<circle cx="117" cy="401" r="6.2" fill="#C99D2E"/>
<text x="126.03" y="406" font-size="14.56" fill="#000" stroke="#000" stroke-width="0.4" textLength="63.46" lengthAdjust="spacingAndGlyphs">working</text>
<polygon points="71.2,413.8 81.8,413.8 76.5,423.4" fill="#707070"/>
<rect x="82" y="418" width="1" height="1" fill="#7A7A7A"/>
<rect x="84" y="418" width="1" height="1" fill="#7A7A7A"/>
<rect x="86" y="418" width="1" height="1" fill="#7A7A7A"/>
<rect x="88" y="418" width="1" height="1" fill="#7A7A7A"/>
<circle cx="97.0" cy="418.0" r="6.2" fill="#C99D2E"/>
<rect x="94" y="415" width="6" height="1" fill="#FFFFFF"/>
<rect x="94" y="417" width="6" height="1" fill="#FFFFFF"/>
<rect x="94" y="419" width="6" height="1" fill="#FFFFFF"/>
<text x="106.03" y="423" font-size="14.56" fill="#000" stroke="#000" stroke-width="0.4" textLength="250.91" lengthAdjust="spacingAndGlyphs">workday_late_afternoon_activity</text>
<rect x="98" y="435" width="1" height="1" fill="#7A7A7A"/>
<rect x="100" y="435" width="1" height="1" fill="#7A7A7A"/>
<rect x="102" y="435" width="1" height="1" fill="#7A7A7A"/>
<rect x="104" y="435" width="1" height="1" fill="#7A7A7A"/>
<rect x="106" y="435" width="1" height="1" fill="#7A7A7A"/>
<rect x="108" y="435" width="1" height="1" fill="#7A7A7A"/>
<circle cx="117" cy="435" r="6.2" fill="#C99D2E"/>
<text x="125.28" y="440" font-size="14.56" fill="#000" stroke="#000" stroke-width="0.4" textLength="178.55" lengthAdjust="spacingAndGlyphs">doing_a_house_activity</text>
<polygon points="92,447.5 92,457.5 101,452.5" fill="#707070"/>
<rect x="102" y="452" width="1" height="1" fill="#7A7A7A"/>
<rect x="104" y="452" width="1" height="1" fill="#7A7A7A"/>
<rect x="106" y="452" width="1" height="1" fill="#7A7A7A"/>
<rect x="108" y="452" width="1" height="1" fill="#7A7A7A"/>
<circle cx="117" cy="452" r="6.2" fill="#C99D2E"/>
<text x="125.25" y="457" font-size="14.56" fill="#000" stroke="#000" stroke-width="0.4" textLength="140.49" lengthAdjust="spacingAndGlyphs">education_activity</text>
<rect x="98" y="469" width="1" height="1" fill="#7A7A7A"/>
<rect x="100" y="469" width="1" height="1" fill="#7A7A7A"/>
<rect x="102" y="469" width="1" height="1" fill="#7A7A7A"/>
<rect x="104" y="469" width="1" height="1" fill="#7A7A7A"/>
<rect x="106" y="469" width="1" height="1" fill="#7A7A7A"/>
<rect x="108" y="469" width="1" height="1" fill="#7A7A7A"/>
<circle cx="117" cy="469" r="6.2" fill="#C99D2E"/>
<text x="124.78" y="474" font-size="14.56" fill="#000" stroke="#000" stroke-width="0.4" textLength="185.36" lengthAdjust="spacingAndGlyphs">having_sightseeing_trip</text>
<polygon points="92,481.5 92,491.5 101,486.5" fill="#707070"/>
<rect x="102" y="486" width="1" height="1" fill="#7A7A7A"/>
<rect x="104" y="486" width="1" height="1" fill="#7A7A7A"/>
<rect x="106" y="486" width="1" height="1" fill="#7A7A7A"/>
<rect x="108" y="486" width="1" height="1" fill="#7A7A7A"/>
<circle cx="117" cy="486" r="6.2" fill="#C99D2E"/>
<text x="125.25" y="491" font-size="14.56" fill="#000" stroke="#000" stroke-width="0.4" textLength="175.48" lengthAdjust="spacingAndGlyphs">outdoor_other_activity</text>
<polygon points="92,498.5 92,508.5 101,503.5" fill="#707070"/>
<rect x="102" y="503" width="1" height="1" fill="#7A7A7A"/>
<rect x="104" y="503" width="1" height="1" fill="#7A7A7A"/>
<rect x="106" y="503" width="1" height="1" fill="#7A7A7A"/>
<rect x="108" y="503" width="1" height="1" fill="#7A7A7A"/>
<circle cx="117" cy="503" r="6.2" fill="#C99D2E"/>
<text x="124.87" y="508" font-size="14.56" fill="#000" stroke="#000" stroke-width="0.4" textLength="111.01" lengthAdjust="spacingAndGlyphs">personal_care</text>
<polygon points="92,515.5 92,525.5 101,520.5" fill="#707070"/>
<rect x="102" y="520" width="1" height="1" fill="#7A7A7A"/>
<rect x="104" y="520" width="1" height="1" fill="#7A7A7A"/>
<rect x="106" y="520" width="1" height="1" fill="#7A7A7A"/>
<rect x="108" y="520" width="1" height="1" fill="#7A7A7A"/>
<circle cx="117" cy="520" r="6.2" fill="#C99D2E"/>
<text x="124.82" y="525" font-size="14.56" fill="#000" stroke="#000" stroke-width="0.4" textLength="140.91" lengthAdjust="spacingAndGlyphs">relaxation_activity</text>
<polygon points="92,532.5 92,542.5 101,537.5" fill="#707070"/>
<rect x="102" y="537" width="1" height="1" fill="#7A7A7A"/>
<rect x="104" y="537" width="1" height="1" fill="#7A7A7A"/>
<rect x="106" y="537" width="1" height="1" fill="#7A7A7A"/>
<rect x="108" y="537" width="1" height="1" fill="#7A7A7A"/>
<circle cx="117" cy="537" r="6.2" fill="#C99D2E"/>
<text x="124.81" y="542" font-size="14.56" fill="#000" stroke="#000" stroke-width="0.4" textLength="131.12" lengthAdjust="spacingAndGlyphs">religious_activity</text>
<polygon points="92,549.5 92,559.5 101,554.5" fill="#707070"/>
<rect x="102" y="554" width="1" height="1" fill="#7A7A7A"/>
<rect x="104" y="554" width="1" height="1" fill="#7A7A7A"/>
<rect x="106" y="554" width="1" height="1" fill="#7A7A7A"/>
<rect x="108" y="554" width="1" height="1" fill="#7A7A7A"/>
<circle cx="117" cy="554" r="6.2" fill="#C99D2E"/>
<text x="125.52" y="559" font-size="14.56" fill="#000" stroke="#000" stroke-width="0.4" textLength="179.81" lengthAdjust="spacingAndGlyphs">services_and_business</text>
<rect x="388" y="53" width="15" height="512" fill="#ECE9DA"/>
<rect x="388" y="53" width="1" height="512" fill="#7A7A7A"/>
<rect x="389" y="53" width="14" height="16" fill="#ECE9D8"/>
<rect x="389" y="53" width="14" height="1" fill="#FFFFFF"/>
<rect x="389" y="53" width="1" height="16" fill="#FFFFFF"/>
<rect x="389" y="68" width="14" height="1" fill="#7A7A7A"/>
<polygon points="391.5,61.5 400.5,61.5 396,57" fill="#000"/>
<rect x="389" y="549" width="14" height="16" fill="#ECE9D8"/>
<rect x="389" y="549" width="14" height="1" fill="#7A7A7A"/>
<rect x="389" y="550" width="14" height="1" fill="#FFFFFF"/>
<rect x="389" y="550" width="1" height="15" fill="#FFFFFF"/>
<polygon points="391.5,555 400.5,555 396,559.5" fill="#000"/>
<rect x="388" y="198" width="15" height="230" fill="#C1D2EE"/>
<rect x="388" y="198" width="15" height="1" fill="#316AC5"/>
<rect x="388" y="198" width="1" height="230" fill="#316AC5"/>
<rect x="388" y="427" width="15" height="1" fill="#316AC5"/>
<rect x="389" y="199" width="14" height="1" fill="#FFFFFF"/>
<rect x="389" y="199" width="1" height="228" fill="#FFFFFF"/>
<rect x="392" y="303" width="1" height="1" fill="#316AC5"/>
<rect x="393" y="304" width="1" height="1" fill="#FFFFFF"/>
<rect x="396" y="303" width="1" height="1" fill="#316AC5"/>
<rect x="397" y="304" width="1" height="1" fill="#FFFFFF"/>
<rect x="400" y="303" width="1" height="1" fill="#316AC5"/>
<rect x="401" y="304" width="1" height="1" fill="#FFFFFF"/>
<rect x="394" y="305" width="1" height="1" fill="#316AC5"/>
<rect x="395" y="306" width="1" height="1" fill="#FFFFFF"/>
<rect x="398" y="305" width="1" height="1" fill="#316AC5"/>
<rect x="399" y="306" width="1" height="1" fill="#FFFFFF"/>
<rect x="392" y="307" width="1" height="1" fill="#316AC5"/>
<rect x="393" y="308" width="1" height="1" fill="#FFFFFF"/>
<rect x="396" y="307" width="1" height="1" fill="#316AC5"/>
<rect x="397" y="308" width="1" height="1" fill="#FFFFFF"/>
<rect x="400" y="307" width="1" height="1" fill="#316AC5"/>
<rect x="401" y="308" width="1" height="1" fill="#FFFFFF"/>
<rect x="394" y="309" width="1" height="1" fill="#316AC5"/>
<rect x="395" y="310" width="1" height="1" fill="#FFFFFF"/>
<rect x="398" y="309" width="1" height="1" fill="#316AC5"/>
<rect x="399" y="310" width="1" height="1" fill="#FFFFFF"/>
<rect x="392" y="311" width="1" height="1" fill="#316AC5"/>
<rect x="393" y="312" width="1" height="1" fill="#FFFFFF"/>
<rect x="396" y="311" width="1" height="1" fill="#316AC5"/>
<rect x="397" y="312" width="1" height="1" fill="#FFFFFF"/>
<rect x="400" y="311" width="1" height="1" fill="#316AC5"/>
<rect x="401" y="312" width="1" height="1" fill="#FFFFFF"/>
<rect x="394" y="313" width="1" height="1" fill="#316AC5"/>
<rect x="395" y="314" width="1" height="1" fill="#FFFFFF"/>
<rect x="398" y="313" width="1" height="1" fill="#316AC5"/>
<rect x="399" y="314" width="1" height="1" fill="#FFFFFF"/>
<rect x="392" y="315" width="1" height="1" fill="#316AC5"/>
<rect x="393" y="316" width="1" height="1" fill="#FFFFFF"/>
<rect x="396" y="315" width="1" height="1" fill="#316AC5"/>
<rect x="397" y="316" width="1" height="1" fill="#FFFFFF"/>
<rect x="400" y="315" width="1" height="1" fill="#316AC5"/>
<rect x="401" y="316" width="1" height="1" fill="#FFFFFF"/>
<rect x="394" y="317" width="1" height="1" fill="#316AC5"/>
<rect x="395" y="318" width="1" height="1" fill="#FFFFFF"/>
<rect x="398" y="317" width="1" height="1" fill="#316AC5"/>
<rect x="399" y="318" width="1" height="1" fill="#FFFFFF"/>
<rect x="392" y="319" width="1" height="1" fill="#316AC5"/>
<rect x="393" y="320" width="1" height="1" fill="#FFFFFF"/>
<rect x="396" y="319" width="1" height="1" fill="#316AC5"/>
<rect x="397" y="320" width="1" height="1" fill="#FFFFFF"/>
<rect x="400" y="319" width="1" height="1" fill="#316AC5"/>
<rect x="401" y="320" width="1" height="1" fill="#FFFFFF"/>
<rect x="394" y="321" width="1" height="1" fill="#316AC5"/>
<rect x="395" y="322" width="1" height="1" fill="#FFFFFF"/>
<rect x="398" y="321" width="1" height="1" fill="#316AC5"/>
<rect x="399" y="322" width="1" height="1" fill="#FFFFFF"/>
<rect x="392" y="323" width="1" height="1" fill="#316AC5"/>
<rect x="393" y="324" width="1" height="1" fill="#FFFFFF"/>
<rect x="396" y="323" width="1" height="1" fill="#316AC5"/>
<rect x="397" y="324" width="1" height="1" fill="#FFFFFF"/>
<rect x="400" y="323" width="1" height="1" fill="#316AC5"/>
<rect x="401" y="324" width="1" height="1" fill="#FFFFFF"/>
<rect x="418" y="4" width="443" height="1" fill="#C0C0C0"/>
<rect x="418" y="573" width="443" height="1" fill="#C0C0C0"/>
<rect x="418" y="4" width="1" height="570" fill="#C0C0C0"/>
<rect x="860" y="4" width="1" height="570" fill="#C0C0C0"/>
<rect x="425" y="11" width="429" height="1" fill="#C0C0C0"/>
<rect x="425" y="190" width="429" height="1" fill="#C0C0C0"/>
<rect x="425" y="11" width="1" height="180" fill="#C0C0C0"/>
<rect x="853" y="11" width="1" height="180" fill="#C0C0C0"/>
<polygon points="429,36 429,25 435,19 537,19 537,36" fill="#ECE9D8"/>
<rect x="435" y="19" width="102" height="1" fill="#7A7A7A"/>
<rect x="435" y="20" width="101" height="1" fill="#FFFFFF"/>
<rect x="429" y="25" width="1" height="11" fill="#7A7A7A"/>
<rect x="430" y="25" width="1" height="11" fill="#FFFFFF"/>
<rect x="536" y="19" width="1" height="17" fill="#7A7A7A"/>
<rect x="429" y="25" width="1" height="1" fill="#7A7A7A"/>
<rect x="430" y="24" width="1" height="1" fill="#7A7A7A"/>
<rect x="431" y="23" width="1" height="1" fill="#7A7A7A"/>
<rect x="432" y="22" width="1" height="1" fill="#7A7A7A"/>
<rect x="433" y="21" width="1" height="1" fill="#7A7A7A"/>
<rect x="434" y="20" width="1" height="1" fill="#7A7A7A"/>
<text x="439.35" y="31" font-size="10.00" font-weight="normal" fill="#000" textLength="87.34" lengthAdjust="spacingAndGlyphs">Class Annotations</text>
<polygon points="537,36 537,25 543,19 616,19 616,36" fill="#C1C1B3"/>
<rect x="543" y="20" width="72" height="1" fill="#EEECE2"/>
<rect x="538" y="25" width="1" height="11" fill="#E4E2D6"/>
<rect x="543" y="19" width="73" height="1" fill="#7A7A7A"/>
<rect x="537" y="25" width="1" height="11" fill="#7A7A7A"/>
<rect x="615" y="19" width="1" height="17" fill="#7A7A7A"/>
<rect x="537" y="25" width="1" height="1" fill="#7A7A7A"/>
<rect x="538" y="24" width="1" height="1" fill="#7A7A7A"/>
<rect x="539" y="23" width="1" height="1" fill="#7A7A7A"/>
<rect x="540" y="22" width="1" height="1" fill="#7A7A7A"/>
<rect x="541" y="21" width="1" height="1" fill="#7A7A7A"/>
<rect x="542" y="20" width="1" height="1" fill="#7A7A7A"/>
<text x="546.16" y="31" font-size="10.00" font-weight="normal" fill="#000" textLength="60.31" lengthAdjust="spacingAndGlyphs">Class Usage</text>
<rect x="537" y="36" width="312" height="1" fill="#FFFFFF"/>
<rect x="429" y="36" width="1" height="150" fill="#FFFFFF"/>
<rect x="849" y="36" width="1" height="151" fill="#7A7A7A"/>
<rect x="429" y="186" width="421" height="1" fill="#7A7A7A"/>
<rect x="431" y="38" width="416" height="14" fill="#C99D2E"/>
<text x="434.48" y="49" font-size="11.44" font-weight="normal" fill="#FFFFFF" textLength="261.25" lengthAdjust="spacingAndGlyphs">Annotations: workday_early_afternoon_activity</text>
<rect x="806" y="41" width="8" height="8" fill="#FFFFFF"/>
<rect x="807" y="42" width="2" height="6" fill="#C99D2E"/>
<rect x="811" y="42" width="2" height="6" fill="#C99D2E"/>
<rect x="816" y="41" width="8" height="8" fill="#FFFFFF"/>
<rect x="817" y="42" width="6" height="2" fill="#C99D2E"/>
<rect x="817" y="46" width="6" height="2" fill="#C99D2E"/>
<rect x="826" y="41" width="8" height="8" fill="#FFFFFF"/>
<rect x="827" y="42" width="6" height="6" fill="#C99D2E"/>
<rect x="828" y="43" width="4" height="4" fill="#FFFFFF"/>
<rect x="836" y="41" width="8" height="8" fill="#FFFFFF"/>
<rect x="837" y="42" width="6" height="6" fill="#C99D2E"/>
<rect x="838" y="43" width="1" height="1" fill="#FFFFFF"/>
<rect x="841" y="43" width="1" height="1" fill="#FFFFFF"/>
<rect x="839" y="44" width="1" height="1" fill="#FFFFFF"/>
<rect x="840" y="44" width="1" height="1" fill="#FFFFFF"/>
<rect x="839" y="45" width="1" height="1" fill="#FFFFFF"/>
<rect x="840" y="45" width="1" height="1" fill="#FFFFFF"/>
<rect x="838" y="46" width="1" height="1" fill="#FFFFFF"/>
<rect x="841" y="46" width="1" height="1" fill="#FFFFFF"/>
<rect x="432" y="60" width="413" height="122" fill="#FFFFFF"/>
<rect x="431" y="59" width="415" height="1" fill="#7A7A7A"/>
<rect x="431" y="59" width="1" height="124" fill="#7A7A7A"/>
<rect x="431" y="182" width="415" height="1" fill="#7A7A7A"/>
<rect x="845" y="59" width="1" height="124" fill="#7A7A7A"/>
<rect x="431" y="183" width="416" height="1" fill="#FFFFFF"/>
<rect x="846" y="59" width="1" height="125" fill="#FFFFFF"/>
<text x="437.08" y="73" font-size="10.00" font-weight="normal" fill="#858585" textLength="57.92" lengthAdjust="spacingAndGlyphs">Annotations</text>
<circle cx="507.4" cy="70.5" r="8.4" fill="#C0C0C0"/>
<path d="M503.2,70.5 H511.59999999999997 M507.4,66.3 V74.7" stroke="#FFFFFF" stroke-width="1.6"/>
<rect x="425" y="197" width="429" height="1" fill="#C0C0C0"/>
<rect x="425" y="566" width="429" height="1" fill="#C0C0C0"/>
<rect x="425" y="197" width="1" height="370" fill="#C0C0C0"/>
<rect x="853" y="197" width="1" height="370" fill="#C0C0C0"/>
<rect x="429" y="201" width="421" height="14" fill="#C99D2E"/>
<text x="431.86" y="212" font-size="11.44" font-weight="normal" fill="#FFFFFF" textLength="259.17" lengthAdjust="spacingAndGlyphs">Description: workday_early_afternoon_activity</text>
<rect x="809" y="204" width="8" height="8" fill="#FFFFFF"/>
<rect x="810" y="205" width="2" height="6" fill="#C99D2E"/>
<rect x="814" y="205" width="2" height="6" fill="#C99D2E"/>
<rect x="819" y="204" width="8" height="8" fill="#FFFFFF"/>
<rect x="820" y="205" width="6" height="2" fill="#C99D2E"/>
<rect x="820" y="209" width="6" height="2" fill="#C99D2E"/>
<rect x="829" y="204" width="8" height="8" fill="#FFFFFF"/>
<rect x="830" y="205" width="6" height="6" fill="#C99D2E"/>
<rect x="831" y="206" width="4" height="4" fill="#FFFFFF"/>
<rect x="839" y="204" width="8" height="8" fill="#FFFFFF"/>
<rect x="840" y="205" width="6" height="6" fill="#C99D2E"/>
<rect x="841" y="206" width="1" height="1" fill="#FFFFFF"/>
<rect x="844" y="206" width="1" height="1" fill="#FFFFFF"/>
<rect x="842" y="207" width="1" height="1" fill="#FFFFFF"/>
<rect x="843" y="207" width="1" height="1" fill="#FFFFFF"/>
<rect x="842" y="208" width="1" height="1" fill="#FFFFFF"/>
<rect x="843" y="208" width="1" height="1" fill="#FFFFFF"/>
<rect x="841" y="209" width="1" height="1" fill="#FFFFFF"/>
<rect x="844" y="209" width="1" height="1" fill="#FFFFFF"/>
<rect x="430" y="223" width="418" height="338" fill="#FFFFFF"/>
<rect x="429" y="222" width="420" height="1" fill="#7A7A7A"/>
<rect x="429" y="222" width="1" height="340" fill="#7A7A7A"/>
<rect x="429" y="561" width="420" height="1" fill="#7A7A7A"/>
<rect x="848" y="222" width="1" height="340" fill="#7A7A7A"/>
<rect x="429" y="562" width="421" height="1" fill="#FFFFFF"/>
<rect x="849" y="222" width="1" height="341" fill="#FFFFFF"/>
<text x="434.52" y="236" font-size="10.00" font-weight="normal" fill="#858585" textLength="88.77" lengthAdjust="spacingAndGlyphs">Equivalent classes</text>
<circle cx="535.3" cy="233.4" r="8.4" fill="#C0C0C0"/>
<path d="M531.0999999999999,233.4 H539.5 M535.3,229.20000000000002 V237.6" stroke="#FFFFFF" stroke-width="1.6"/>
<rect x="432" y="245" width="414" height="70" fill="#EFF3EE"/>
<rect x="431" y="244" width="416" height="1" fill="#C0C0C0"/>
<rect x="431" y="315" width="416" height="1" fill="#C0C0C0"/>
<rect x="431" y="244" width="1" height="72" fill="#C0C0C0"/>
<rect x="846" y="244" width="1" height="72" fill="#C0C0C0"/>
<circle cx="441" cy="254" r="6.2" fill="#C99D2E"/>
<text x="449.12" y="258.5" font-size="14.56" fill="#000" stroke="#000" stroke-width="0.4" textLength="55.91" lengthAdjust="spacingAndGlyphs">activity</text>
<text x="449.04" y="275.5" font-size="14.56" fill="#1DAFB4" stroke="#1DAFB4" stroke-width="0.4" textLength="29.67" lengthAdjust="spacingAndGlyphs">and</text>
<text x="483.69" y="275.5" font-size="14.56" fill="#000" stroke="#000" stroke-width="0.4" textLength="149.83" lengthAdjust="spacingAndGlyphs">is_usually_done_on</text>
<text x="638.66" y="275.5" font-size="14.56" fill="#A81AAA" stroke="#A81AAA" stroke-width="0.4" textLength="42.04" lengthAdjust="spacingAndGlyphs">some</text>
<text x="686.04" y="275.5" font-size="14.56" fill="#000" stroke="#000" stroke-width="0.4" textLength="66.90" lengthAdjust="spacingAndGlyphs">workday</text>
<text x="449.04" y="292.5" font-size="14.56" fill="#1DAFB4" stroke="#1DAFB4" stroke-width="0.4" textLength="29.67" lengthAdjust="spacingAndGlyphs">and</text>
<text x="483.66" y="292.5" font-size="14.56" fill="#000" stroke="#000" stroke-width="0.4" textLength="181.99" lengthAdjust="spacingAndGlyphs">is_usually_done_during</text>
<text x="670.86" y="292.5" font-size="14.56" fill="#A81AAA" stroke="#A81AAA" stroke-width="0.4" textLength="42.04" lengthAdjust="spacingAndGlyphs">some</text>
<text x="449.04" y="309.5" font-size="14.56" fill="#000" stroke="#000" stroke-width="0.4" textLength="124.42" lengthAdjust="spacingAndGlyphs">early_afternoon</text>
<circle cx="800.3" cy="253.5" r="8" fill="#C0C0C0"/>
<circle cx="818.2" cy="253.5" r="8" fill="#C0C0C0"/>
<circle cx="836.5" cy="253.5" r="8" fill="#C0C0C0"/>
<path d="M803.32,257.30 A4.7,4.7 0 1 1 805.00,254.00 Q805.0,255.89999999999998 803.5,255.89999999999998 Q802.1999999999999,255.89999999999998 802.1999999999999,254.29999999999998 V251.39999999999998" fill="none" stroke="#FFFFFF" stroke-width="1.2"/>
<circle cx="800.0999999999999" cy="253.7" r="2" fill="none" stroke="#FFFFFF" stroke-width="1.2"/>
<path d="M815,250.5 L821.5,257 M821.5,250.5 L815,257" stroke="#FFFFFF" stroke-width="2.2"/>
<circle cx="836.5" cy="253.8" r="2.2" fill="none" stroke="#FFFFFF" stroke-width="1.8"/>
<text x="434.92" y="349" font-size="10.00" font-weight="normal" fill="#858585" textLength="63.66" lengthAdjust="spacingAndGlyphs">Superclasses</text>
<circle cx="510.3" cy="346.3" r="8.4" fill="#C0C0C0"/>
<path d="M506.1,346.3 H514.5 M510.3,342.1 V350.5" stroke="#FFFFFF" stroke-width="1.6"/>
<rect x="431" y="357" width="416" height="21" fill="#FFFFD9"/>
<rect x="431" y="357" width="2" height="1" fill="#A8A8A8"/>
<rect x="436" y="357" width="3" height="1" fill="#A8A8A8"/>
<rect x="442" y="357" width="3" height="1" fill="#A8A8A8"/>
<rect x="448" y="357" width="3" height="1" fill="#A8A8A8"/>
<rect x="454" y="357" width="3" height="1" fill="#A8A8A8"/>
<rect x="460" y="357" width="3" height="1" fill="#A8A8A8"/>
<rect x="466" y="357" width="3" height="1" fill="#A8A8A8"/>
<rect x="472" y="357" width="3" height="1" fill="#A8A8A8"/>
<rect x="478" y="357" width="3" height="1" fill="#A8A8A8"/>
<rect x="484" y="357" width="3" height="1" fill="#A8A8A8"/>
<rect x="490" y="357" width="3" height="1" fill="#A8A8A8"/>
<rect x="496" y="357" width="3" height="1" fill="#A8A8A8"/>
<rect x="502" y="357" width="3" height="1" fill="#A8A8A8"/>
<rect x="508" y="357" width="3" height="1" fill="#A8A8A8"/>
<rect x="514" y="357" width="3" height="1" fill="#A8A8A8"/>
<rect x="520" y="357" width="3" height="1" fill="#A8A8A8"/>
<rect x="526" y="357" width="3" height="1" fill="#A8A8A8"/>
<rect x="532" y="357" width="3" height="1" fill="#A8A8A8"/>
<rect x="538" y="357" width="3" height="1" fill="#A8A8A8"/>
<rect x="544" y="357" width="3" height="1" fill="#A8A8A8"/>
<rect x="550" y="357" width="3" height="1" fill="#A8A8A8"/>
<rect x="556" y="357" width="3" height="1" fill="#A8A8A8"/>
<rect x="562" y="357" width="3" height="1" fill="#A8A8A8"/>
<rect x="568" y="357" width="3" height="1" fill="#A8A8A8"/>
<rect x="574" y="357" width="3" height="1" fill="#A8A8A8"/>
<rect x="580" y="357" width="3" height="1" fill="#A8A8A8"/>
<rect x="586" y="357" width="3" height="1" fill="#A8A8A8"/>
<rect x="592" y="357" width="3" height="1" fill="#A8A8A8"/>
<rect x="598" y="357" width="3" height="1" fill="#A8A8A8"/>
<rect x="604" y="357" width="3" height="1" fill="#A8A8A8"/>
<rect x="610" y="357" width="3" height="1" fill="#A8A8A8"/>
<rect x="616" y="357" width="3" height="1" fill="#A8A8A8"/>
<rect x="622" y="357" width="3" height="1" fill="#A8A8A8"/>
<rect x="628" y="357" width="3" height="1" fill="#A8A8A8"/>
<rect x="634" y="357" width="3" height="1" fill="#A8A8A8"/>
<rect x="640" y="357" width="3" height="1" fill="#A8A8A8"/>
<rect x="646" y="357" width="3" height="1" fill="#A8A8A8"/>
<rect x="652" y="357" width="3" height="1" fill="#A8A8A8"/>
<rect x="658" y="357" width="3" height="1" fill="#A8A8A8"/>
<rect x="664" y="357" width="3" height="1" fill="#A8A8A8"/>
<rect x="670" y="357" width="3" height="1" fill="#A8A8A8"/>
<rect x="676" y="357" width="3" height="1" fill="#A8A8A8"/>
<rect x="682" y="357" width="3" height="1" fill="#A8A8A8"/>
<rect x="688" y="357" width="3" height="1" fill="#A8A8A8"/>
<rect x="694" y="357" width="3" height="1" fill="#A8A8A8"/>
<rect x="700" y="357" width="3" height="1" fill="#A8A8A8"/>
<rect x="706" y="357" width="3" height="1" fill="#A8A8A8"/>
<rect x="712" y="357" width="3" height="1" fill="#A8A8A8"/>
<rect x="718" y="357" width="3" height="1" fill="#A8A8A8"/>
<rect x="724" y="357" width="3" height="1" fill="#A8A8A8"/>
<rect x="730" y="357" width="3" height="1" fill="#A8A8A8"/>
<rect x="736" y="357" width="3" height="1" fill="#A8A8A8"/>
<rect x="742" y="357" width="3" height="1" fill="#A8A8A8"/>
<rect x="748" y="357" width="3" height="1" fill="#A8A8A8"/>
<rect x="754" y="357" width="3" height="1" fill="#A8A8A8"/>
<rect x="760" y="357" width="3" height="1" fill="#A8A8A8"/>
<rect x="766" y="357" width="3" height="1" fill="#A8A8A8"/>
<rect x="772" y="357" width="3" height="1" fill="#A8A8A8"/>
<rect x="778" y="357" width="3" height="1" fill="#A8A8A8"/>
<rect x="784" y="357" width="3" height="1" fill="#A8A8A8"/>
<rect x="790" y="357" width="3" height="1" fill="#A8A8A8"/>
<rect x="796" y="357" width="3" height="1" fill="#A8A8A8"/>
<rect x="802" y="357" width="3" height="1" fill="#A8A8A8"/>
<rect x="808" y="357" width="3" height="1" fill="#A8A8A8"/>
<rect x="814" y="357" width="3" height="1" fill="#A8A8A8"/>
<rect x="820" y="357" width="3" height="1" fill="#A8A8A8"/>
<rect x="826" y="357" width="3" height="1" fill="#A8A8A8"/>
<rect x="832" y="357" width="3" height="1" fill="#A8A8A8"/>
<rect x="838" y="357" width="3" height="1" fill="#A8A8A8"/>
<rect x="844" y="357" width="3" height="1" fill="#A8A8A8"/>
<rect x="847" y="360" width="1" height="3" fill="#A8A8A8"/>
<rect x="847" y="366" width="1" height="3" fill="#A8A8A8"/>
<rect x="847" y="372" width="1" height="3" fill="#A8A8A8"/>
<rect x="847" y="378" width="1" height="1" fill="#A8A8A8"/>
<rect x="431" y="378" width="2" height="1" fill="#A8A8A8"/>
<rect x="436" y="378" width="3" height="1" fill="#A8A8A8"/>
<rect x="442" y="378" width="3" height="1" fill="#A8A8A8"/>
<rect x="448" y="378" width="3" height="1" fill="#A8A8A8"/>
<rect x="454" y="378" width="3" height="1" fill="#A8A8A8"/>
<rect x="460" y="378" width="3" height="1" fill="#A8A8A8"/>
<rect x="466" y="378" width="3" height="1" fill="#A8A8A8"/>
<rect x="472" y="378" width="3" height="1" fill="#A8A8A8"/>
<rect x="478" y="378" width="3" height="1" fill="#A8A8A8"/>
<rect x="484" y="378" width="3" height="1" fill="#A8A8A8"/>
<rect x="490" y="378" width="3" height="1" fill="#A8A8A8"/>
<rect x="496" y="378" width="3" height="1" fill="#A8A8A8"/>
<rect x="502" y="378" width="3" height="1" fill="#A8A8A8"/>
<rect x="508" y="378" width="3" height="1" fill="#A8A8A8"/>
<rect x="514" y="378" width="3" height="1" fill="#A8A8A8"/>
<rect x="520" y="378" width="3" height="1" fill="#A8A8A8"/>
<rect x="526" y="378" width="3" height="1" fill="#A8A8A8"/>
<rect x="532" y="378" width="3" height="1" fill="#A8A8A8"/>
<rect x="538" y="378" width="3" height="1" fill="#A8A8A8"/>
<rect x="544" y="378" width="3" height="1" fill="#A8A8A8"/>
<rect x="550" y="378" width="3" height="1" fill="#A8A8A8"/>
<rect x="556" y="378" width="3" height="1" fill="#A8A8A8"/>
<rect x="562" y="378" width="3" height="1" fill="#A8A8A8"/>
<rect x="568" y="378" width="3" height="1" fill="#A8A8A8"/>
<rect x="574" y="378" width="3" height="1" fill="#A8A8A8"/>
<rect x="580" y="378" width="3" height="1" fill="#A8A8A8"/>
<rect x="586" y="378" width="3" height="1" fill="#A8A8A8"/>
<rect x="592" y="378" width="3" height="1" fill="#A8A8A8"/>
<rect x="598" y="378" width="3" height="1" fill="#A8A8A8"/>
<rect x="604" y="378" width="3" height="1" fill="#A8A8A8"/>
<rect x="610" y="378" width="3" height="1" fill="#A8A8A8"/>
<rect x="616" y="378" width="3" height="1" fill="#A8A8A8"/>
<rect x="622" y="378" width="3" height="1" fill="#A8A8A8"/>
<rect x="628" y="378" width="3" height="1" fill="#A8A8A8"/>
<rect x="634" y="378" width="3" height="1" fill="#A8A8A8"/>
<rect x="640" y="378" width="3" height="1" fill="#A8A8A8"/>
<rect x="646" y="378" width="3" height="1" fill="#A8A8A8"/>
<rect x="652" y="378" width="3" height="1" fill="#A8A8A8"/>
<rect x="658" y="378" width="3" height="1" fill="#A8A8A8"/>
<rect x="664" y="378" width="3" height="1" fill="#A8A8A8"/>
<rect x="670" y="378" width="3" height="1" fill="#A8A8A8"/>
<rect x="676" y="378" width="3" height="1" fill="#A8A8A8"/>
<rect x="682" y="378" width="3" height="1" fill="#A8A8A8"/>
<rect x="688" y="378" width="3" height="1" fill="#A8A8A8"/>
<rect x="694" y="378" width="3" height="1" fill="#A8A8A8"/>
<rect x="700" y="378" width="3" height="1" fill="#A8A8A8"/>
<rect x="706" y="378" width="3" height="1" fill="#A8A8A8"/>
<rect x="712" y="378" width="3" height="1" fill="#A8A8A8"/>
<rect x="718" y="378" width="3" height="1" fill="#A8A8A8"/>
<rect x="724" y="378" width="3" height="1" fill="#A8A8A8"/>
<rect x="730" y="378" width="3" height="1" fill="#A8A8A8"/>
<rect x="736" y="378" width="3" height="1" fill="#A8A8A8"/>
<rect x="742" y="378" width="3" height="1" fill="#A8A8A8"/>
<rect x="748" y="378" width="3" height="1" fill="#A8A8A8"/>
<rect x="754" y="378" width="3" height="1" fill="#A8A8A8"/>
<rect x="760" y="378" width="3" height="1" fill="#A8A8A8"/>
<rect x="766" y="378" width="3" height="1" fill="#A8A8A8"/>
<rect x="772" y="378" width="3" height="1" fill="#A8A8A8"/>
<rect x="778" y="378" width="3" height="1" fill="#A8A8A8"/>
<rect x="784" y="378" width="3" height="1" fill="#A8A8A8"/>
<rect x="790" y="378" width="3" height="1" fill="#A8A8A8"/>
<rect x="796" y="378" width="3" height="1" fill="#A8A8A8"/>
<rect x="802" y="378" width="3" height="1" fill="#A8A8A8"/>
<rect x="808" y="378" width="3" height="1" fill="#A8A8A8"/>
<rect x="814" y="378" width="3" height="1" fill="#A8A8A8"/>
<rect x="820" y="378" width="3" height="1" fill="#A8A8A8"/>
<rect x="826" y="378" width="3" height="1" fill="#A8A8A8"/>
<rect x="832" y="378" width="3" height="1" fill="#A8A8A8"/>
<rect x="838" y="378" width="3" height="1" fill="#A8A8A8"/>
<rect x="844" y="378" width="3" height="1" fill="#A8A8A8"/>
<rect x="431" y="359" width="1" height="3" fill="#A8A8A8"/>
<rect x="431" y="365" width="1" height="3" fill="#A8A8A8"/>
<rect x="431" y="371" width="1" height="3" fill="#A8A8A8"/>
<rect x="431" y="377" width="1" height="2" fill="#A8A8A8"/>
<circle cx="441" cy="367" r="6.2" fill="#C99D2E"/>
<rect x="438" y="364" width="6" height="1" fill="#FFFFFF"/>
<rect x="438" y="366" width="6" height="1" fill="#FFFFFF"/>
<rect x="438" y="368" width="6" height="1" fill="#FFFFFF"/>
<text x="449.92" y="371.5" font-size="14.56" font-weight="normal" fill="#000" textLength="183.01" lengthAdjust="spacingAndGlyphs">workday_afternoon_activity</text>
<circle cx="836.2" cy="366.4" r="8" fill="#C0C0C0"/>
<path d="M839.22,370.00 A4.7,4.7 0 1 1 840.90,366.70 Q840.9000000000001,368.59999999999997 839.4000000000001,368.59999999999997 Q838.1,368.59999999999997 838.1,367.0 V364.09999999999997" fill="none" stroke="#FFFFFF" stroke-width="1.2"/>
<circle cx="836.0" cy="366.4" r="2" fill="none" stroke="#FFFFFF" stroke-width="1.2"/>
<text x="434.49" y="411" font-size="10.00" font-weight="normal" fill="#858585" textLength="163.80" lengthAdjust="spacingAndGlyphs">Inferred anonymous superclasses</text>
<rect x="431" y="419" width="416" height="55" fill="#FFFFD9"/>
<rect x="431" y="419" width="2" height="1" fill="#A8A8A8"/>
<rect x="436" y="419" width="3" height="1" fill="#A8A8A8"/>
<rect x="442" y="419" width="3" height="1" fill="#A8A8A8"/>
<rect x="448" y="419" width="3" height="1" fill="#A8A8A8"/>
<rect x="454" y="419" width="3" height="1" fill="#A8A8A8"/>
<rect x="460" y="419" width="3" height="1" fill="#A8A8A8"/>
<rect x="466" y="419" width="3" height="1" fill="#A8A8A8"/>
<rect x="472" y="419" width="3" height="1" fill="#A8A8A8"/>
<rect x="478" y="419" width="3" height="1" fill="#A8A8A8"/>
<rect x="484" y="419" width="3" height="1" fill="#A8A8A8"/>
<rect x="490" y="419" width="3" height="1" fill="#A8A8A8"/>
<rect x="496" y="419" width="3" height="1" fill="#A8A8A8"/>
<rect x="502" y="419" width="3" height="1" fill="#A8A8A8"/>
<rect x="508" y="419" width="3" height="1" fill="#A8A8A8"/>
<rect x="514" y="419" width="3" height="1" fill="#A8A8A8"/>
<rect x="520" y="419" width="3" height="1" fill="#A8A8A8"/>
<rect x="526" y="419" width="3" height="1" fill="#A8A8A8"/>
<rect x="532" y="419" width="3" height="1" fill="#A8A8A8"/>
<rect x="538" y="419" width="3" height="1" fill="#A8A8A8"/>
<rect x="544" y="419" width="3" height="1" fill="#A8A8A8"/>
<rect x="550" y="419" width="3" height="1" fill="#A8A8A8"/>
<rect x="556" y="419" width="3" height="1" fill="#A8A8A8"/>
<rect x="562" y="419" width="3" height="1" fill="#A8A8A8"/>
<rect x="568" y="419" width="3" height="1" fill="#A8A8A8"/>
<rect x="574" y="419" width="3" height="1" fill="#A8A8A8"/>
<rect x="580" y="419" width="3" height="1" fill="#A8A8A8"/>
<rect x="586" y="419" width="3" height="1" fill="#A8A8A8"/>
<rect x="592" y="419" width="3" height="1" fill="#A8A8A8"/>
<rect x="598" y="419" width="3" height="1" fill="#A8A8A8"/>
<rect x="604" y="419" width="3" height="1" fill="#A8A8A8"/>
<rect x="610" y="419" width="3" height="1" fill="#A8A8A8"/>
<rect x="616" y="419" width="3" height="1" fill="#A8A8A8"/>
<rect x="622" y="419" width="3" height="1" fill="#A8A8A8"/>
<rect x="628" y="419" width="3" height="1" fill="#A8A8A8"/>
<rect x="634" y="419" width="3" height="1" fill="#A8A8A8"/>
<rect x="640" y="419" width="3" height="1" fill="#A8A8A8"/>
<rect x="646" y="419" width="3" height="1" fill="#A8A8A8"/>
<rect x="652" y="419" width="3" height="1" fill="#A8A8A8"/>
<rect x="658" y="419" width="3" height="1" fill="#A8A8A8"/>
<rect x="664" y="419" width="3" height="1" fill="#A8A8A8"/>
<rect x="670" y="419" width="3" height="1" fill="#A8A8A8"/>
<rect x="676" y="419" width="3" height="1" fill="#A8A8A8"/>
<rect x="682" y="419" width="3" height="1" fill="#A8A8A8"/>
<rect x="688" y="419" width="3" height="1" fill="#A8A8A8"/>
<rect x="694" y="419" width="3" height="1" fill="#A8A8A8"/>
<rect x="700" y="419" width="3" height="1" fill="#A8A8A8"/>
<rect x="706" y="419" width="3" height="1" fill="#A8A8A8"/>
<rect x="712" y="419" width="3" height="1" fill="#A8A8A8"/>
<rect x="718" y="419" width="3" height="1" fill="#A8A8A8"/>
<rect x="724" y="419" width="3" height="1" fill="#A8A8A8"/>
<rect x="730" y="419" width="3" height="1" fill="#A8A8A8"/>
<rect x="736" y="419" width="3" height="1" fill="#A8A8A8"/>
<rect x="742" y="419" width="3" height="1" fill="#A8A8A8"/>
<rect x="748" y="419" width="3" height="1" fill="#A8A8A8"/>
<rect x="754" y="419" width="3" height="1" fill="#A8A8A8"/>
<rect x="760" y="419" width="3" height="1" fill="#A8A8A8"/>
<rect x="766" y="419" width="3" height="1" fill="#A8A8A8"/>
<rect x="772" y="419" width="3" height="1" fill="#A8A8A8"/>
<rect x="778" y="419" width="3" height="1" fill="#A8A8A8"/>
<rect x="784" y="419" width="3" height="1" fill="#A8A8A8"/>
<rect x="790" y="419" width="3" height="1" fill="#A8A8A8"/>
<rect x="796" y="419" width="3" height="1" fill="#A8A8A8"/>
<rect x="802" y="419" width="3" height="1" fill="#A8A8A8"/>
<rect x="808" y="419" width="3" height="1" fill="#A8A8A8"/>
<rect x="814" y="419" width="3" height="1" fill="#A8A8A8"/>
<rect x="820" y="419" width="3" height="1" fill="#A8A8A8"/>
<rect x="826" y="419" width="3" height="1" fill="#A8A8A8"/>
<rect x="832" y="419" width="3" height="1" fill="#A8A8A8"/>
<rect x="838" y="419" width="3" height="1" fill="#A8A8A8"/>
<rect x="844" y="419" width="3" height="1" fill="#A8A8A8"/>
<rect x="847" y="422" width="1" height="3" fill="#A8A8A8"/>
<rect x="847" y="428" width="1" height="3" fill="#A8A8A8"/>
<rect x="847" y="434" width="1" height="3" fill="#A8A8A8"/>
<rect x="847" y="440" width="1" height="3" fill="#A8A8A8"/>
<rect x="847" y="446" width="1" height="3" fill="#A8A8A8"/>
<rect x="847" y="452" width="1" height="3" fill="#A8A8A8"/>
<rect x="847" y="458" width="1" height="3" fill="#A8A8A8"/>
<rect x="847" y="464" width="1" height="3" fill="#A8A8A8"/>
<rect x="847" y="470" width="1" height="3" fill="#A8A8A8"/>
<rect x="434" y="474" width="3" height="1" fill="#A8A8A8"/>
<rect x="440" y="474" width="3" height="1" fill="#A8A8A8"/>
<rect x="446" y="474" width="3" height="1" fill="#A8A8A8"/>
<rect x="452" y="474" width="3" height="1" fill="#A8A8A8"/>
<rect x="458" y="474" width="3" height="1" fill="#A8A8A8"/>
<rect x="464" y="474" width="3" height="1" fill="#A8A8A8"/>
<rect x="470" y="474" width="3" height="1" fill="#A8A8A8"/>
<rect x="476" y="474" width="3" height="1" fill="#A8A8A8"/>
<rect x="482" y="474" width="3" height="1" fill="#A8A8A8"/>
<rect x="488" y="474" width="3" height="1" fill="#A8A8A8"/>
<rect x="494" y="474" width="3" height="1" fill="#A8A8A8"/>
<rect x="500" y="474" width="3" height="1" fill="#A8A8A8"/>
<rect x="506" y="474" width="3" height="1" fill="#A8A8A8"/>
<rect x="512" y="474" width="3" height="1" fill="#A8A8A8"/>
<rect x="518" y="474" width="3" height="1" fill="#A8A8A8"/>
<rect x="524" y="474" width="3" height="1" fill="#A8A8A8"/>
<rect x="530" y="474" width="3" height="1" fill="#A8A8A8"/>
<rect x="536" y="474" width="3" height="1" fill="#A8A8A8"/>
<rect x="542" y="474" width="3" height="1" fill="#A8A8A8"/>
<rect x="548" y="474" width="3" height="1" fill="#A8A8A8"/>
<rect x="554" y="474" width="3" height="1" fill="#A8A8A8"/>
<rect x="560" y="474" width="3" height="1" fill="#A8A8A8"/>
<rect x="566" y="474" width="3" height="1" fill="#A8A8A8"/>
<rect x="572" y="474" width="3" height="1" fill="#A8A8A8"/>
<rect x="578" y="474" width="3" height="1" fill="#A8A8A8"/>
<rect x="584" y="474" width="3" height="1" fill="#A8A8A8"/>
<rect x="590" y="474" width="3" height="1" fill="#A8A8A8"/>
<rect x="596" y="474" width="3" height="1" fill="#A8A8A8"/>
<rect x="602" y="474" width="3" height="1" fill="#A8A8A8"/>
<rect x="608" y="474" width="3" height="1" fill="#A8A8A8"/>
<rect x="614" y="474" width="3" height="1" fill="#A8A8A8"/>
<rect x="620" y="474" width="3" height="1" fill="#A8A8A8"/>
<rect x="626" y="474" width="3" height="1" fill="#A8A8A8"/>
<rect x="632" y="474" width="3" height="1" fill="#A8A8A8"/>
<rect x="638" y="474" width="3" height="1" fill="#A8A8A8"/>
<rect x="644" y="474" width="3" height="1" fill="#A8A8A8"/>
<rect x="650" y="474" width="3" height="1" fill="#A8A8A8"/>
<rect x="656" y="474" width="3" height="1" fill="#A8A8A8"/>
<rect x="662" y="474" width="3" height="1" fill="#A8A8A8"/>
<rect x="668" y="474" width="3" height="1" fill="#A8A8A8"/>
<rect x="674" y="474" width="3" height="1" fill="#A8A8A8"/>
<rect x="680" y="474" width="3" height="1" fill="#A8A8A8"/>
<rect x="686" y="474" width="3" height="1" fill="#A8A8A8"/>
<rect x="692" y="474" width="3" height="1" fill="#A8A8A8"/>
<rect x="698" y="474" width="3" height="1" fill="#A8A8A8"/>
<rect x="704" y="474" width="3" height="1" fill="#A8A8A8"/>
<rect x="710" y="474" width="3" height="1" fill="#A8A8A8"/>
<rect x="716" y="474" width="3" height="1" fill="#A8A8A8"/>
<rect x="722" y="474" width="3" height="1" fill="#A8A8A8"/>
<rect x="728" y="474" width="3" height="1" fill="#A8A8A8"/>
<rect x="734" y="474" width="3" height="1" fill="#A8A8A8"/>
<rect x="740" y="474" width="3" height="1" fill="#A8A8A8"/>
<rect x="746" y="474" width="3" height="1" fill="#A8A8A8"/>
<rect x="752" y="474" width="3" height="1" fill="#A8A8A8"/>
<rect x="758" y="474" width="3" height="1" fill="#A8A8A8"/>
<rect x="764" y="474" width="3" height="1" fill="#A8A8A8"/>
<rect x="770" y="474" width="3" height="1" fill="#A8A8A8"/>
<rect x="776" y="474" width="3" height="1" fill="#A8A8A8"/>
<rect x="782" y="474" width="3" height="1" fill="#A8A8A8"/>
<rect x="788" y="474" width="3" height="1" fill="#A8A8A8"/>
<rect x="794" y="474" width="3" height="1" fill="#A8A8A8"/>
<rect x="800" y="474" width="3" height="1" fill="#A8A8A8"/>
<rect x="806" y="474" width="3" height="1" fill="#A8A8A8"/>
<rect x="812" y="474" width="3" height="1" fill="#A8A8A8"/>
<rect x="818" y="474" width="3" height="1" fill="#A8A8A8"/>
<rect x="824" y="474" width="3" height="1" fill="#A8A8A8"/>
<rect x="830" y="474" width="3" height="1" fill="#A8A8A8"/>
<rect x="836" y="474" width="3" height="1" fill="#A8A8A8"/>
<rect x="842" y="474" width="3" height="1" fill="#A8A8A8"/>
<rect x="431" y="419" width="1" height="1" fill="#A8A8A8"/>
<rect x="431" y="423" width="1" height="3" fill="#A8A8A8"/>
<rect x="431" y="429" width="1" height="3" fill="#A8A8A8"/>
<rect x="431" y="435" width="1" height="3" fill="#A8A8A8"/>
<rect x="431" y="441" width="1" height="3" fill="#A8A8A8"/>
<rect x="431" y="447" width="1" height="3" fill="#A8A8A8"/>
<rect x="431" y="453" width="1" height="3" fill="#A8A8A8"/>
<rect x="431" y="459" width="1" height="3" fill="#A8A8A8"/>
<rect x="431" y="465" width="1" height="3" fill="#A8A8A8"/>
<rect x="431" y="471" width="1" height="3" fill="#A8A8A8"/>
<circle cx="441" cy="430" r="6.2" fill="#C99D2E"/>
<text x="449.27" y="434" font-size="14.56" font-weight="normal" fill="#000" textLength="45.26" lengthAdjust="spacingAndGlyphs">activity</text>
<text x="449.06" y="451" font-size="14.56" fill="#1DAFB4" stroke="#1DAFB4" stroke-width="0.4" textLength="29.03" lengthAdjust="spacingAndGlyphs">and</text>
<text x="482.80" y="451" font-size="14.56" font-weight="normal" fill="#000" textLength="131.38" lengthAdjust="spacingAndGlyphs">is_usually_done_on</text>
<text x="619.00" y="451" font-size="14.56" fill="#A81AAA" stroke="#A81AAA" stroke-width="0.4" textLength="41.13" lengthAdjust="spacingAndGlyphs">some</text>
<text x="665.03" y="451" font-size="14.56" font-weight="normal" fill="#000" textLength="57.60" lengthAdjust="spacingAndGlyphs">workday</text>
<text x="449.06" y="468" font-size="14.56" fill="#1DAFB4" stroke="#1DAFB4" stroke-width="0.4" textLength="29.10" lengthAdjust="spacingAndGlyphs">and</text>
<text x="482.86" y="468" font-size="14.56" font-weight="normal" fill="#000" textLength="158.90" lengthAdjust="spacingAndGlyphs">is_usually_done_during</text>
<text x="646.66" y="468" font-size="14.56" fill="#A81AAA" stroke="#A81AAA" stroke-width="0.4" textLength="41.22" lengthAdjust="spacingAndGlyphs">some</text>
<text x="692.34" y="468" font-size="14.56" font-weight="normal" fill="#000" textLength="66.89" lengthAdjust="spacingAndGlyphs">afternoon</text>
<circle cx="836.2" cy="428.2" r="8" fill="#C0C0C0"/>
<path d="M839.22,431.80 A4.7,4.7 0 1 1 840.90,428.50 Q840.9000000000001,430.4 839.4000000000001,430.4 Q838.1,430.4 838.1,428.8 V425.9" fill="none" stroke="#FFFFFF" stroke-width="1.2"/>
<circle cx="836.0" cy="428.2" r="2" fill="none" stroke="#FFFFFF" stroke-width="1.2"/>
<text x="434.58" y="507" font-size="10.00" font-weight="normal" fill="#858585" textLength="46.83" lengthAdjust="spacingAndGlyphs">Members</text>
<circle cx="493.4" cy="504.4" r="8.4" fill="#C0C0C0"/>
<path d="M489.2,504.4 H497.59999999999997 M493.4,500.2 V508.59999999999997" stroke="#FFFFFF" stroke-width="1.6"/>
<text x="434.63" y="546" font-size="10.00" font-weight="normal" fill="#858585" textLength="72.75" lengthAdjust="spacingAndGlyphs">Disjoint classes</text>
<circle cx="519.4" cy="543.4" r="8.4" fill="#C0C0C0"/>
<path d="M515.1999999999999,543.4 H523.6 M519.4,539.1999999999999 V547.6" stroke="#FFFFFF" stroke-width="1.6"/>
</svg>
</body></html>
